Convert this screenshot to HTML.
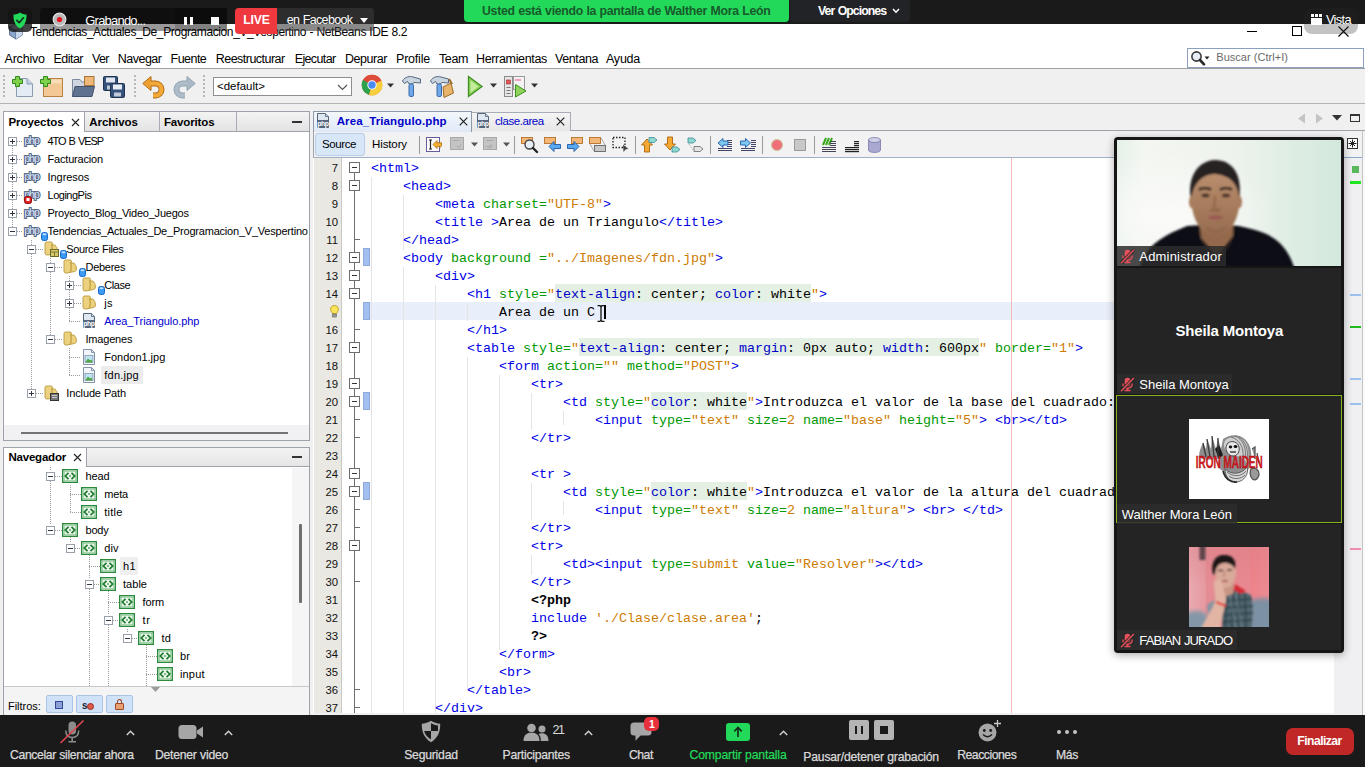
<!DOCTYPE html>
<html>
<head>
<meta charset="utf-8">
<title>Zoom - NetBeans</title>
<style>
*{box-sizing:border-box;margin:0;padding:0}
html,body{width:1365px;height:767px;overflow:hidden;background:#f0f0f0;font-family:"Liberation Sans",sans-serif;}
.a{position:absolute}
.t{position:absolute;white-space:nowrap;line-height:1}
#zt{left:0;top:0;width:1365px;height:24px;background:#1a1a1a}
#nbtitle{left:0;top:24px;width:1365px;height:23px;background:#fff}
#nbmenu{left:0;top:47px;width:1365px;height:22px;background:#fff;border-bottom:1px solid #a0a0a0}
#nbtool{left:0;top:70px;width:1365px;height:34px;background:#f0f0f0;border-bottom:1px solid #b4b4b4}
#zb{left:0;top:715px;width:1365px;height:52px;background:#1a1a1a}
.menu{font-size:12.4px;color:#000;top:53px}
.zl{font-size:12.3px;color:#d8d8d8;top:749px;letter-spacing:-0.1px}
.tree{font-size:11.6px;color:#000;letter-spacing:-0.2px}
.code{font-family:"Liberation Mono",monospace;font-size:13.333px;white-space:pre;color:#000;left:371px}
.ln{font-size:11.3px;color:#111;width:25px;text-align:right;left:313px}
.b{color:#0000e6}.g{color:#009900}.o{color:#ce7b00}.k{font-weight:bold}
.hl{background:#e3f0e3;padding:3px 0 0 0}.n{color:#0000c8}
</style>
</head>
<body>
<!-- ===== NetBeans window chrome ===== -->
<div class="a" id="nbtitle"></div>
<div class="a" id="nbmenu"></div>
<div class="a" id="nbtool"></div>
<!--TITLE-->
<svg class="a" style="left:8px;top:23px" width="16" height="17" viewBox="0 0 20 21"><path d="M10 1 L18 5 L18 15 L10 20 L2 15 L2 5 Z" fill="#8ea6c9" stroke="#3c5680" stroke-width="1"/><path d="M2 5 L10 9 L18 5 M10 9 L10 20" stroke="#3c5680" stroke-width="1" fill="none"/><path d="M10 9 L18 5 L18 15 L10 20Z" fill="#c9d6ea"/><path d="M2 5 L10 1 L18 5 L10 9Z" fill="#dfe8f5" stroke="#3c5680" stroke-width=".8"/></svg>
<div class="t" style="left:30.0px;top:26.0px;font-size:12.00px;color:#000;letter-spacing:-0.39px;word-spacing:0.39px;">Tendencias_Actuales_De_Programacion_V_Vespertino - NetBeans IDE 8.2</div>
<div class="a" style="left:1247px;top:31px;width:10px;height:1px;background:#000"></div>
<div class="a" style="left:1292px;top:26px;width:10px;height:10px;border:1px solid #000"></div>
<svg class="a" style="left:1338px;top:26px" width="11" height="11"><path d="M0.5 0.5 L10.5 10.5 M10.5 0.5 L0.5 10.5" stroke="#000" stroke-width="1.1"/></svg>
<!--/TITLE-->
<!--MENU-->
<div class="t" style="left:4.5px;top:53.0px;font-size:12.50px;color:#000;letter-spacing:-0.20px;">Archivo</div>
<div class="t" style="left:53.5px;top:53.0px;font-size:12.50px;color:#000;letter-spacing:-0.53px;">Editar</div>
<div class="t" style="left:92.0px;top:53.0px;font-size:12.50px;color:#000;letter-spacing:-0.72px;">Ver</div>
<div class="t" style="left:117.8px;top:53.0px;font-size:12.50px;color:#000;letter-spacing:-0.52px;">Navegar</div>
<div class="t" style="left:170.6px;top:53.0px;font-size:12.50px;color:#000;letter-spacing:-0.54px;">Fuente</div>
<div class="t" style="left:215.7px;top:53.0px;font-size:12.50px;color:#000;letter-spacing:-0.52px;">Reestructurar</div>
<div class="t" style="left:294.7px;top:53.0px;font-size:12.50px;color:#000;letter-spacing:-0.63px;">Ejecutar</div>
<div class="t" style="left:345.0px;top:53.0px;font-size:12.50px;color:#000;letter-spacing:-0.45px;">Depurar</div>
<div class="t" style="left:396.0px;top:53.0px;font-size:12.50px;color:#000;letter-spacing:-0.21px;">Profile</div>
<div class="t" style="left:439.0px;top:53.0px;font-size:12.50px;color:#000;letter-spacing:-0.39px;">Team</div>
<div class="t" style="left:476.0px;top:53.0px;font-size:12.50px;color:#000;letter-spacing:-0.34px;">Herramientas</div>
<div class="t" style="left:555.0px;top:53.0px;font-size:12.50px;color:#000;letter-spacing:-0.41px;">Ventana</div>
<div class="t" style="left:606.0px;top:53.0px;font-size:12.50px;color:#000;letter-spacing:-0.24px;">Ayuda</div>
<div class="a" style="left:1187px;top:48px;width:177px;height:20px;background:#fff;border:1px solid #8aa0bd"></div>
<svg class="a" style="left:1190px;top:50px" width="22" height="16" viewBox="0 0 22 16"><circle cx="6.5" cy="6.5" r="4.6" fill="#e8eef8" stroke="#3a3a3a" stroke-width="1.6"/><path d="M10 10 L14 14.3" stroke="#2a2a2a" stroke-width="2.6" stroke-linecap="round"/><path d="M14.5 6.5 L19.5 6.5 L17 9.5Z" fill="#222"/></svg>
<div class="t" style="left:1216.3px;top:52.0px;font-size:11.00px;color:#6a6a6a;letter-spacing:0.03px;word-spacing:-0.03px;">Buscar (Ctrl+I)</div>
<!--/MENU-->
<!--TOOLBAR-->
<div class="a" style="left:3px;top:75px;width:2px;height:24px;background:repeating-linear-gradient(to bottom,#b8b8b8 0,#b8b8b8 2px,transparent 2px,transparent 4px)"></div>
<div class="a" style="left:134px;top:75px;width:2px;height:24px;background:repeating-linear-gradient(to bottom,#b8b8b8 0,#b8b8b8 2px,transparent 2px,transparent 4px)"></div>
<div class="a" style="left:203px;top:75px;width:2px;height:24px;background:repeating-linear-gradient(to bottom,#b8b8b8 0,#b8b8b8 2px,transparent 2px,transparent 4px)"></div>
<svg class="a" style="left:11px;top:75px" width="24" height="24" viewBox="0 0 24 24"><path d="M5.5 3.5 H16 L21.5 9 V21.5 H5.5Z" fill="#e3ecf5" stroke="#8a9bb0"/><path d="M16 3.5 V9 H21.5" fill="#c5d3e2" stroke="#8a9bb0"/><path d="M4.5 1.5 h4 v3 h3 v4 h-3 v3 h-4 v-3 h-3 v-4 h3z" fill="#7fd04a" stroke="#2f8a1c" stroke-width="1"/></svg>
<svg class="a" style="left:39px;top:75px" width="26" height="24" viewBox="0 0 26 24"><rect x="4.5" y="3.5" width="19" height="18" fill="#f3c895" stroke="#b98245"/><rect x="5.5" y="4.5" width="17" height="4" fill="#f8dcb8"/><path d="M4.5 1.5 h4 v3 h3 v4 h-3 v3 h-4 v-3 h-3 v-4 h3z" fill="#7fd04a" stroke="#2f8a1c" stroke-width="1"/></svg>
<svg class="a" style="left:71px;top:75px" width="25" height="24" viewBox="0 0 25 24"><path d="M1.5 21.5 V4.5 H9 L11 7 H18 V21.5Z" fill="#cfd6df" stroke="#7d8aa0"/><rect x="13.500" y="1.500" width="9.5" height="9" fill="#f0b877" stroke="#a8733a"/><path d="M1.5 21.5 L4 11.500 H23.500 L21 21.5Z" fill="#5f7391" stroke="#41536e"/></svg>
<svg class="a" style="left:102px;top:75px" width="25" height="24" viewBox="0 0 25 24"><rect x="1.500" y="1.500" width="14" height="14" rx="1" fill="#35527a" stroke="#1f3350"/><rect x="4" y="2.500" width="9" height="5" fill="#dfe6ef"/><rect x="5" y="10.5" width="7" height="4" fill="#c0cad8"/><rect x="8.500" y="8.500" width="14" height="14" rx="1" fill="#35527a" stroke="#1f3350"/><rect x="11" y="9.500" width="9" height="5" fill="#e8eef5"/><rect x="12" y="17.500" width="7" height="4" fill="#c0cad8"/></svg>
<svg class="a" style="left:142px;top:75px" width="24" height="24" viewBox="0 0 24 24"><path d="M8 8.500 H13.500 A6 6 0 0 1 13.500 20.500 H11" stroke="#b06a10" stroke-width="6" fill="none"/><path d="M0.800 8.500 L9 1.500 V15.500Z" fill="#f0a030" stroke="#b06a10" stroke-width="1"/><path d="M8 8.500 H13.500 A6 6 0 0 1 13.500 20.500 H11" stroke="#f3a83a" stroke-width="4.200" fill="none"/></svg>
<svg class="a" style="left:172px;top:75px" width="24" height="24" viewBox="0 0 24 24"><path d="M16 8.500 H10.500 A6 6 0 0 0 10.500 20.500 H13" stroke="#93a3b0" stroke-width="6" fill="none"/><path d="M23.200 8.500 L15 1.500 V15.500Z" fill="#a9b8c4" stroke="#93a3b0" stroke-width="1"/><path d="M16 8.500 H10.500 A6 6 0 0 0 10.500 20.500 H13" stroke="#adbcc8" stroke-width="4.200" fill="none"/></svg>
<div class="a" style="left:213px;top:77px;width:139px;height:19px;background:#fff;border:1px solid #8e8e8e"></div>
<div class="t" style="left:217.0px;top:81.0px;font-size:11.50px;color:#000;">&lt;default&gt;</div>
<svg class="a" style="left:337px;top:84px" width="11" height="7"><path d="M1 1 L5.500 5.500 L10 1" stroke="#555" stroke-width="1.200" fill="none"/></svg>
<svg class="a" style="left:361px;top:74px" width="22" height="22" viewBox="0 0 22 22"><circle cx="11" cy="11" r="10.300" fill="#dd4b3a"/><path d="M11 11 L2.100 5.800 A10.300 10.300 0 0 0 8 20.850Z" fill="#2fa24e"/><path d="M11 11 L8 20.850 A10.300 10.300 0 0 0 20.300 6.500 L11 6.500Z" fill="#f7cf3d"/><path d="M11 11 L20.300 6.500 A10.300 10.300 0 0 0 2.100 5.800Z" fill="#dd4b3a"/><circle cx="11" cy="11" r="4.700" fill="#fff"/><circle cx="11" cy="11" r="3.700" fill="#4a8af4"/></svg>
<svg class="a" style="left:387px;top:83px" width="7" height="5"><path d="M0 0.500 H7 L3.500 4.500Z" fill="#333"/></svg>
<svg class="a" style="left:401px;top:75px" width="21" height="23" viewBox="0 0 21 23"><path d="M1.500 6 C4 1.500 9 1 12 2 L19.500 4 L19.500 8 L13 7.500 L11 9 L8 9 L6.500 6.500 L3.500 8.500Z" fill="#c8d4e0" stroke="#55687f"/><rect x="8" y="9" width="4.500" height="12.500" rx="1.500" fill="#6fa8e8" stroke="#3b68a8"/></svg>
<svg class="a" style="left:429px;top:75px" width="26" height="23" viewBox="0 0 26 23"><path d="M1.500 6 C4 1.500 9 1 12 2 L19.500 4 L19.500 8 L13 7.500 L11 9 L8 9 L6.500 6.500 L3.500 8.500Z" fill="#c8d4e0" stroke="#55687f"/><rect x="8" y="9" width="4.500" height="12.500" rx="1.500" fill="#6fa8e8" stroke="#3b68a8"/><path d="M14 12 L22 8 L24.500 18 L15 22.500Z" fill="#e8b46a" stroke="#9a6a2a"/><path d="M20 4 L23 9" stroke="#9a6a2a" stroke-width="2"/></svg>
<svg class="a" style="left:466px;top:75px" width="18" height="23" viewBox="0 0 18 23"><path d="M2.500 1.500 L16 11.500 L2.500 21.500Z" fill="#8fd45a" stroke="#3f8f22" stroke-width="1.300"/><path d="M4.500 5.500 L12.500 11.500 L4.500 17.500Z" fill="#c5eda0"/></svg>
<svg class="a" style="left:490px;top:83px" width="7" height="5"><path d="M0 0.500 H7 L3.500 4.500Z" fill="#333"/></svg>
<svg class="a" style="left:503px;top:75px" width="25" height="23" viewBox="0 0 25 23"><rect x="1.500" y="1.500" width="8" height="20" fill="#e6e6e6" stroke="#8a8a8a"/><rect x="3.500" y="5" width="4" height="4" fill="#e05a5a" stroke="#a02a2a" stroke-width=".6"/><path d="M3.500 12.500h4M3.500 15.500h4M3.500 18.500h4" stroke="#777" stroke-width="1"/><rect x="10.500" y="1.500" width="11" height="13" fill="#f3f3f3" stroke="#9a9a9a"/><rect x="12" y="4" width="6" height="2" fill="#f0a0c0"/><path d="M12.500 9.500 L23 16 L12.500 22Z" fill="#8fd45a" stroke="#3f8f22"/></svg>
<svg class="a" style="left:531px;top:83px" width="7" height="5"><path d="M0 0.500 H7 L3.500 4.500Z" fill="#333"/></svg>
<!--/TOOLBAR-->
<!--PROJECTS-->
<!-- ===== Projects panel ===== -->
<div class="a" style="left:3px;top:111px;width:307px;height:330px;background:#fff;border:1px solid #9ea3ab"></div>
<div class="a" style="left:4px;top:112px;width:305px;height:20px;background:linear-gradient(#f3f3f3,#e3e3e3);border-bottom:1px solid #9ea3ab"></div>
<div class="a" style="left:4px;top:112px;width:81px;height:20px;background:#fff;border-right:1px solid #9ea3ab"></div>
<div class="a" style="left:159px;top:112px;width:1px;height:19px;background:#a8adb5"></div><div class="a" style="left:236px;top:112px;width:1px;height:19px;background:#a8adb5"></div>
<div class="t" style="left:8.5px;top:117.0px;font-size:11.50px;color:#000;font-weight:700;letter-spacing:-0.07px;">Proyectos</div>
<svg class="a" style="left:71px;top:118px" width="9" height="9"><path d="M1 1 L8 8 M8 1 L1 8" stroke="#222" stroke-width="1.100"/></svg>
<div class="t" style="left:89.3px;top:117.0px;font-size:11.50px;color:#000;font-weight:700;letter-spacing:-0.10px;">Archivos</div>
<div class="t" style="left:164.0px;top:117.0px;font-size:11.50px;color:#000;font-weight:700;letter-spacing:-0.15px;">Favoritos</div>
<div class="a" style="left:292px;top:121px;width:10px;height:2px;background:#333"></div>
<div class="a" style="left:12px;top:146px;width:1px;height:81px;background:repeating-linear-gradient(to bottom,#9a9a9a 0,#9a9a9a 1px,transparent 1px,transparent 2px)"></div>
<div class="a" style="left:17px;top:141px;width:6px;height:1px;background:repeating-linear-gradient(to right,#9a9a9a 0,#9a9a9a 1px,transparent 1px,transparent 2px)"></div>
<div class="a" style="left:8px;top:137px;width:9px;height:9px;background:#fff;border:1px solid #9aa0aa"></div><div class="a" style="left:10px;top:141px;width:5px;height:1px;background:#334"></div><div class="a" style="left:12px;top:139px;width:1px;height:5px;background:#334"></div>
<div class="t" style="left:24px;top:136px;font-size:10.4px;font-weight:700;color:#c6d6ec;letter-spacing:-1.5px;-webkit-text-stroke:1.5px #2f4262;paint-order:stroke fill">php</div>
<div class="t" style="left:47.5px;top:136.0px;font-size:11.00px;color:#000;letter-spacing:-1.06px;word-spacing:1.06px;">4TO B VESP</div>
<div class="a" style="left:17px;top:159px;width:6px;height:1px;background:repeating-linear-gradient(to right,#9a9a9a 0,#9a9a9a 1px,transparent 1px,transparent 2px)"></div>
<div class="a" style="left:8px;top:155px;width:9px;height:9px;background:#fff;border:1px solid #9aa0aa"></div><div class="a" style="left:10px;top:159px;width:5px;height:1px;background:#334"></div><div class="a" style="left:12px;top:157px;width:1px;height:5px;background:#334"></div>
<div class="t" style="left:24px;top:154px;font-size:10.4px;font-weight:700;color:#c6d6ec;letter-spacing:-1.5px;-webkit-text-stroke:1.5px #2f4262;paint-order:stroke fill">php</div>
<div class="t" style="left:47.5px;top:154.0px;font-size:11.00px;color:#000;letter-spacing:-0.18px;">Facturacion</div>
<div class="a" style="left:17px;top:177px;width:6px;height:1px;background:repeating-linear-gradient(to right,#9a9a9a 0,#9a9a9a 1px,transparent 1px,transparent 2px)"></div>
<div class="a" style="left:8px;top:173px;width:9px;height:9px;background:#fff;border:1px solid #9aa0aa"></div><div class="a" style="left:10px;top:177px;width:5px;height:1px;background:#334"></div><div class="a" style="left:12px;top:175px;width:1px;height:5px;background:#334"></div>
<div class="t" style="left:24px;top:172px;font-size:10.4px;font-weight:700;color:#c6d6ec;letter-spacing:-1.5px;-webkit-text-stroke:1.5px #2f4262;paint-order:stroke fill">php</div>
<div class="t" style="left:47.5px;top:172.0px;font-size:11.00px;color:#000;letter-spacing:-0.05px;">Ingresos</div>
<div class="a" style="left:17px;top:195px;width:6px;height:1px;background:repeating-linear-gradient(to right,#9a9a9a 0,#9a9a9a 1px,transparent 1px,transparent 2px)"></div>
<div class="a" style="left:8px;top:191px;width:9px;height:9px;background:#fff;border:1px solid #9aa0aa"></div><div class="a" style="left:10px;top:195px;width:5px;height:1px;background:#334"></div><div class="a" style="left:12px;top:193px;width:1px;height:5px;background:#334"></div>
<div class="t" style="left:24px;top:190px;font-size:10.4px;font-weight:700;color:#c6d6ec;letter-spacing:-1.5px;-webkit-text-stroke:1.5px #2f4262;paint-order:stroke fill">php</div>
<div class="t" style="left:47.5px;top:190.0px;font-size:11.00px;color:#000;letter-spacing:-0.49px;">LogingPis</div>
<div class="a" style="left:17px;top:213px;width:6px;height:1px;background:repeating-linear-gradient(to right,#9a9a9a 0,#9a9a9a 1px,transparent 1px,transparent 2px)"></div>
<div class="a" style="left:8px;top:209px;width:9px;height:9px;background:#fff;border:1px solid #9aa0aa"></div><div class="a" style="left:10px;top:213px;width:5px;height:1px;background:#334"></div><div class="a" style="left:12px;top:211px;width:1px;height:5px;background:#334"></div>
<div class="t" style="left:24px;top:208px;font-size:10.4px;font-weight:700;color:#c6d6ec;letter-spacing:-1.5px;-webkit-text-stroke:1.5px #2f4262;paint-order:stroke fill">php</div>
<div class="t" style="left:47.5px;top:208.0px;font-size:11.00px;color:#000;letter-spacing:-0.23px;">Proyecto_Blog_Video_Juegos</div>
<svg class="a" style="left:24px;top:196px" width="8" height="8"><rect x="0.500" y="0.500" width="7" height="7" rx="2" fill="#e02020" stroke="#901010"/><rect x="2.500" y="2" width="3" height="3" fill="#fff"/></svg>
<div class="a" style="left:17px;top:231px;width:6px;height:1px;background:repeating-linear-gradient(to right,#9a9a9a 0,#9a9a9a 1px,transparent 1px,transparent 2px)"></div>
<div class="a" style="left:8px;top:227px;width:9px;height:9px;background:#fff;border:1px solid #9aa0aa"></div><div class="a" style="left:10px;top:231px;width:5px;height:1px;background:#334"></div>
<div class="t" style="left:24px;top:226px;font-size:10.4px;font-weight:700;color:#c6d6ec;letter-spacing:-1.5px;-webkit-text-stroke:1.5px #2f4262;paint-order:stroke fill">php</div>
<svg class="a" style="left:41px;top:232px" width="7" height="9" viewBox="0 0 7 9"><rect x="0.500" y="0.500" width="6" height="8" rx="2" fill="#3a9af5" stroke="#1668c8"/><ellipse cx="3.500" cy="2.300" rx="2" ry="1" fill="#bfe0ff"/></svg>
<div class="t" style="left:47.5px;top:226.0px;font-size:11.00px;color:#000;letter-spacing:-0.21px;">Tendencias_Actuales_De_Programacion_V_Vespertino</div>
<div class="a" style="left:31px;top:240px;width:1px;height:153px;background:repeating-linear-gradient(to bottom,#9a9a9a 0,#9a9a9a 1px,transparent 1px,transparent 2px)"></div>
<div class="a" style="left:36px;top:249px;width:7px;height:1px;background:repeating-linear-gradient(to right,#9a9a9a 0,#9a9a9a 1px,transparent 1px,transparent 2px)"></div>
<div class="a" style="left:27px;top:245px;width:9px;height:9px;background:#fff;border:1px solid #9aa0aa"></div><div class="a" style="left:29px;top:249px;width:5px;height:1px;background:#334"></div>
<svg class="a" style="left:44px;top:241px" width="15" height="15" viewBox="0 0 15 15"><path d="M1 2.500 Q1 1 2.500 1 H7 Q8.500 1 8.500 2.500 V4 H11 Q13.500 6.500 13.500 10 Q13.500 12 11.500 12.500 L4 14 Q1 14.500 1 12Z" fill="#ecd17e" stroke="#b99a3c" stroke-width=".9"/><path d="M7.500 3 Q9 7 7.500 13" stroke="#c9a94a" stroke-width="1.600" fill="none"/></svg><svg class="a" style="left:50px;top:249px" width="9" height="8"><rect x="0.500" y="0.500" width="8" height="7" fill="#d8c86a" stroke="#6a6a2a"/><path d="M0.500 3H8.500M4.500 3V7.500" stroke="#6a6a2a" stroke-width=".8"/></svg>
<svg class="a" style="left:60px;top:250px" width="7" height="9" viewBox="0 0 7 9"><rect x="0.500" y="0.500" width="6" height="8" rx="2" fill="#3a9af5" stroke="#1668c8"/><ellipse cx="3.500" cy="2.300" rx="2" ry="1" fill="#bfe0ff"/></svg>
<div class="t" style="left:66.3px;top:244.0px;font-size:11.00px;color:#000;letter-spacing:-0.36px;word-spacing:0.36px;">Source Files</div>
<div class="a" style="left:50px;top:258px;width:1px;height:81px;background:repeating-linear-gradient(to bottom,#9a9a9a 0,#9a9a9a 1px,transparent 1px,transparent 2px)"></div>
<div class="a" style="left:55px;top:267px;width:7px;height:1px;background:repeating-linear-gradient(to right,#9a9a9a 0,#9a9a9a 1px,transparent 1px,transparent 2px)"></div>
<div class="a" style="left:46px;top:263px;width:9px;height:9px;background:#fff;border:1px solid #9aa0aa"></div><div class="a" style="left:48px;top:267px;width:5px;height:1px;background:#334"></div>
<svg class="a" style="left:63px;top:259px" width="15" height="15" viewBox="0 0 15 15"><path d="M1 2.500 Q1 1 2.500 1 H7 Q8.500 1 8.500 2.500 V4 H11 Q13.500 6.500 13.500 10 Q13.500 12 11.500 12.500 L4 14 Q1 14.500 1 12Z" fill="#ecd17e" stroke="#b99a3c" stroke-width=".9"/><path d="M7.500 3 Q9 7 7.500 13" stroke="#c9a94a" stroke-width="1.600" fill="none"/></svg>
<svg class="a" style="left:79px;top:268px" width="7" height="9" viewBox="0 0 7 9"><rect x="0.500" y="0.500" width="6" height="8" rx="2" fill="#3a9af5" stroke="#1668c8"/><ellipse cx="3.500" cy="2.300" rx="2" ry="1" fill="#bfe0ff"/></svg>
<div class="t" style="left:85.5px;top:262.0px;font-size:11.00px;color:#000;letter-spacing:-0.27px;">Deberes</div>
<div class="a" style="left:69px;top:276px;width:1px;height:45px;background:repeating-linear-gradient(to bottom,#9a9a9a 0,#9a9a9a 1px,transparent 1px,transparent 2px)"></div>
<div class="a" style="left:74px;top:285px;width:7px;height:1px;background:repeating-linear-gradient(to right,#9a9a9a 0,#9a9a9a 1px,transparent 1px,transparent 2px)"></div>
<div class="a" style="left:65px;top:281px;width:9px;height:9px;background:#fff;border:1px solid #9aa0aa"></div><div class="a" style="left:67px;top:285px;width:5px;height:1px;background:#334"></div><div class="a" style="left:69px;top:283px;width:1px;height:5px;background:#334"></div>
<svg class="a" style="left:82px;top:277px" width="15" height="15" viewBox="0 0 15 15"><path d="M1 2.500 Q1 1 2.500 1 H7 Q8.500 1 8.500 2.500 V4 H11 Q13.500 6.500 13.500 10 Q13.500 12 11.500 12.500 L4 14 Q1 14.500 1 12Z" fill="#ecd17e" stroke="#b99a3c" stroke-width=".9"/><path d="M7.500 3 Q9 7 7.500 13" stroke="#c9a94a" stroke-width="1.600" fill="none"/></svg>
<svg class="a" style="left:98px;top:286px" width="7" height="9" viewBox="0 0 7 9"><rect x="0.500" y="0.500" width="6" height="8" rx="2" fill="#3a9af5" stroke="#1668c8"/><ellipse cx="3.500" cy="2.300" rx="2" ry="1" fill="#bfe0ff"/></svg>
<div class="t" style="left:104.3px;top:280.0px;font-size:11.00px;color:#000;letter-spacing:-0.45px;">Clase</div>
<div class="a" style="left:74px;top:303px;width:7px;height:1px;background:repeating-linear-gradient(to right,#9a9a9a 0,#9a9a9a 1px,transparent 1px,transparent 2px)"></div>
<div class="a" style="left:65px;top:299px;width:9px;height:9px;background:#fff;border:1px solid #9aa0aa"></div><div class="a" style="left:67px;top:303px;width:5px;height:1px;background:#334"></div><div class="a" style="left:69px;top:301px;width:1px;height:5px;background:#334"></div>
<svg class="a" style="left:82px;top:295px" width="15" height="15" viewBox="0 0 15 15"><path d="M1 2.500 Q1 1 2.500 1 H7 Q8.500 1 8.500 2.500 V4 H11 Q13.500 6.500 13.500 10 Q13.500 12 11.500 12.500 L4 14 Q1 14.500 1 12Z" fill="#ecd17e" stroke="#b99a3c" stroke-width=".9"/><path d="M7.500 3 Q9 7 7.500 13" stroke="#c9a94a" stroke-width="1.600" fill="none"/></svg>
<div class="t" style="left:104.3px;top:298.0px;font-size:11.00px;color:#000;letter-spacing:0.17px;">js</div>
<div class="a" style="left:69px;top:321px;width:12px;height:1px;background:repeating-linear-gradient(to right,#9a9a9a 0,#9a9a9a 1px,transparent 1px,transparent 2px)"></div>
<svg class="a" style="left:82px;top:313px" width="14" height="16" viewBox="0 0 14 16"><path d="M1.500 0.500 H9.500 L12.500 3.500 V14.500 H1.500Z" fill="#dfe7f1" stroke="#55657c"/><path d="M9.500 0.500 V3.500 H12.500" fill="#c3cfde" stroke="#55657c" stroke-width=".8"/><rect x="2" y="7" width="10" height="7" fill="#56677f"/><text x="7" y="12.700" font-family="Liberation Sans" font-size="6.800" font-weight="700" fill="#fff" text-anchor="middle" letter-spacing="-0.400">php</text></svg>
<div class="t" style="left:104.3px;top:316.0px;font-size:11.00px;color:#0000d0;letter-spacing:-0.06px;">Area_Triangulo.php</div>
<div class="a" style="left:55px;top:339px;width:7px;height:1px;background:repeating-linear-gradient(to right,#9a9a9a 0,#9a9a9a 1px,transparent 1px,transparent 2px)"></div>
<div class="a" style="left:46px;top:335px;width:9px;height:9px;background:#fff;border:1px solid #9aa0aa"></div><div class="a" style="left:48px;top:339px;width:5px;height:1px;background:#334"></div>
<svg class="a" style="left:63px;top:331px" width="15" height="15" viewBox="0 0 15 15"><path d="M1 2.500 Q1 1 2.500 1 H7 Q8.500 1 8.500 2.500 V4 H11 Q13.500 6.500 13.500 10 Q13.500 12 11.500 12.500 L4 14 Q1 14.500 1 12Z" fill="#ecd17e" stroke="#b99a3c" stroke-width=".9"/><path d="M7.500 3 Q9 7 7.500 13" stroke="#c9a94a" stroke-width="1.600" fill="none"/></svg>
<div class="t" style="left:85.5px;top:334.0px;font-size:11.00px;color:#000;letter-spacing:-0.20px;">Imagenes</div>
<div class="a" style="left:69px;top:348px;width:1px;height:27px;background:repeating-linear-gradient(to bottom,#9a9a9a 0,#9a9a9a 1px,transparent 1px,transparent 2px)"></div>
<div class="a" style="left:69px;top:357px;width:12px;height:1px;background:repeating-linear-gradient(to right,#9a9a9a 0,#9a9a9a 1px,transparent 1px,transparent 2px)"></div>
<svg class="a" style="left:82px;top:349px" width="14" height="16" viewBox="0 0 14 16"><path d="M1.500 0.500 H9.500 L12.500 3.500 V15.500 H1.500Z" fill="#f2f5f9" stroke="#8293ab"/><path d="M9.500 0.500 V3.500 H12.500" fill="none" stroke="#8293ab"/><rect x="3" y="6.500" width="8" height="7" fill="#bfe3f5" stroke="#6a7c90" stroke-width=".6"/><path d="M3.300 13.200 L6 9.500 L8 11.500 L9.300 10.500 L10.700 13.200Z" fill="#4aa83a"/></svg>
<div class="t" style="left:104.3px;top:352.0px;font-size:11.00px;color:#000;letter-spacing:-0.02px;">Fondon1.jpg</div>
<div class="a" style="left:101px;top:366px;width:42px;height:18px;background:#ececec"></div>
<div class="a" style="left:69px;top:375px;width:12px;height:1px;background:repeating-linear-gradient(to right,#9a9a9a 0,#9a9a9a 1px,transparent 1px,transparent 2px)"></div>
<svg class="a" style="left:82px;top:367px" width="14" height="16" viewBox="0 0 14 16"><path d="M1.500 0.500 H9.500 L12.500 3.500 V15.500 H1.500Z" fill="#f2f5f9" stroke="#8293ab"/><path d="M9.500 0.500 V3.500 H12.500" fill="none" stroke="#8293ab"/><rect x="3" y="6.500" width="8" height="7" fill="#bfe3f5" stroke="#6a7c90" stroke-width=".6"/><path d="M3.300 13.200 L6 9.500 L8 11.500 L9.300 10.500 L10.700 13.200Z" fill="#4aa83a"/></svg>
<div class="t" style="left:104.3px;top:370.0px;font-size:11.00px;color:#000;letter-spacing:0.22px;">fdn.jpg</div>
<div class="a" style="left:36px;top:393px;width:7px;height:1px;background:repeating-linear-gradient(to right,#9a9a9a 0,#9a9a9a 1px,transparent 1px,transparent 2px)"></div>
<div class="a" style="left:27px;top:389px;width:9px;height:9px;background:#fff;border:1px solid #9aa0aa"></div><div class="a" style="left:29px;top:393px;width:5px;height:1px;background:#334"></div><div class="a" style="left:31px;top:391px;width:1px;height:5px;background:#334"></div>
<svg class="a" style="left:44px;top:385px" width="15" height="15" viewBox="0 0 15 15"><path d="M1 2.500 Q1 1 2.500 1 H7 Q8.500 1 8.500 2.500 V4 H11 Q13.500 6.500 13.500 10 Q13.500 12 11.500 12.500 L4 14 Q1 14.500 1 12Z" fill="#ecd17e" stroke="#b99a3c" stroke-width=".9"/><path d="M7.500 3 Q9 7 7.500 13" stroke="#c9a94a" stroke-width="1.600" fill="none"/></svg><svg class="a" style="left:50px;top:393px" width="9" height="8"><rect x="0.500" y="0.500" width="8" height="7" fill="#777" stroke="#333"/><path d="M2 2.500H7M2 4.500H7" stroke="#ddd" stroke-width=".8"/></svg>
<div class="t" style="left:66.3px;top:388.0px;font-size:11.00px;color:#000;letter-spacing:-0.13px;word-spacing:0.13px;">Include Path</div>
<div class="a" style="left:4px;top:425px;width:305px;height:15px;background:#f1f1f4"></div>
<div class="a" style="left:21px;top:432px;width:267px;height:2px;background:#737373"></div>
<!--/PROJECTS-->
<!--NAVIGATOR-->
<!-- ===== Navigator panel ===== -->
<div class="a" style="left:3px;top:447px;width:307px;height:270px;background:#fff;border:1px solid #9ea3ab"></div>
<div class="a" style="left:4px;top:448px;width:305px;height:19px;background:linear-gradient(#f3f3f3,#e6e6e6);border-bottom:1px solid #9ea3ab"></div>
<div class="a" style="left:4px;top:448px;width:83px;height:19px;background:#fff;border-right:1px solid #9ea3ab"></div>
<div class="t" style="left:8.5px;top:452.0px;font-size:11.50px;color:#000;font-weight:700;letter-spacing:-0.22px;">Navegador</div>
<svg class="a" style="left:73px;top:453px" width="9" height="9"><path d="M1 1 L8 8 M8 1 L1 8" stroke="#222" stroke-width="1.100"/></svg>
<div class="a" style="left:292px;top:456px;width:10px;height:2px;background:#333"></div>
<div class="a" style="left:50px;top:467px;width:1px;height:4px;background:repeating-linear-gradient(to bottom,#9a9a9a 0,#9a9a9a 1px,transparent 1px,transparent 2px)"></div>
<div class="a" style="left:50px;top:481px;width:1px;height:44px;background:repeating-linear-gradient(to bottom,#9a9a9a 0,#9a9a9a 1px,transparent 1px,transparent 2px)"></div>
<div class="a" style="left:70px;top:485px;width:1px;height:28px;background:repeating-linear-gradient(to bottom,#9a9a9a 0,#9a9a9a 1px,transparent 1px,transparent 2px)"></div>
<div class="a" style="left:70px;top:535px;width:1px;height:8px;background:repeating-linear-gradient(to bottom,#9a9a9a 0,#9a9a9a 1px,transparent 1px,transparent 2px)"></div>
<div class="a" style="left:89px;top:553px;width:1px;height:26px;background:repeating-linear-gradient(to bottom,#9a9a9a 0,#9a9a9a 1px,transparent 1px,transparent 2px)"></div>
<div class="a" style="left:108px;top:589px;width:1px;height:26px;background:repeating-linear-gradient(to bottom,#9a9a9a 0,#9a9a9a 1px,transparent 1px,transparent 2px)"></div>
<div class="a" style="left:108px;top:625px;width:1px;height:88px;background:repeating-linear-gradient(to bottom,#9a9a9a 0,#9a9a9a 1px,transparent 1px,transparent 2px)"></div>
<div class="a" style="left:127px;top:629px;width:1px;height:4px;background:repeating-linear-gradient(to bottom,#9a9a9a 0,#9a9a9a 1px,transparent 1px,transparent 2px)"></div>
<div class="a" style="left:89px;top:589px;width:1px;height:124px;background:repeating-linear-gradient(to bottom,#9a9a9a 0,#9a9a9a 1px,transparent 1px,transparent 2px)"></div>
<div class="a" style="left:146px;top:643px;width:1px;height:47px;background:repeating-linear-gradient(to bottom,#9a9a9a 0,#9a9a9a 1px,transparent 1px,transparent 2px)"></div>
<div class="a" style="left:120px;top:557px;width:18px;height:18px;background:#efefef"></div>
<div class="a" style="left:46px;top:472px;width:9px;height:9px;background:#fff;border:1px solid #9aa0aa"></div><div class="a" style="left:48px;top:476px;width:5px;height:1px;background:#334"></div>
<div class="a" style="left:55px;top:476px;width:7px;height:1px;background:repeating-linear-gradient(to right,#9a9a9a 0,#9a9a9a 1px,transparent 1px,transparent 2px)"></div>
<svg class="a" style="left:62px;top:469px" width="16" height="14" viewBox="0 0 16 14"><rect x="0.700" y="0.700" width="14.600" height="12.600" fill="#fff" stroke="#2c8a3c" stroke-width="1.400"/><rect x="2.200" y="2.200" width="11.600" height="9.600" fill="#eaf6ea" stroke="#7cc488" stroke-width=".8"/><path d="M6.500 3.800 L3.300 7 L6.500 10.200 M9.500 3.800 L12.700 7 L9.500 10.200" stroke="#1e7a2e" stroke-width="1.700" fill="none"/><rect x="7.300" y="6.300" width="1.400" height="1.400" fill="#1e7a2e"/></svg>
<div class="t" style="left:85.5px;top:471.0px;font-size:11.00px;color:#000;letter-spacing:-0.12px;">head</div>
<div class="a" style="left:70px;top:494px;width:11px;height:1px;background:repeating-linear-gradient(to right,#9a9a9a 0,#9a9a9a 1px,transparent 1px,transparent 2px)"></div>
<svg class="a" style="left:81px;top:487px" width="16" height="14" viewBox="0 0 16 14"><rect x="0.700" y="0.700" width="14.600" height="12.600" fill="#fff" stroke="#2c8a3c" stroke-width="1.400"/><rect x="2.200" y="2.200" width="11.600" height="9.600" fill="#eaf6ea" stroke="#7cc488" stroke-width=".8"/><path d="M6.500 3.800 L3.300 7 L6.500 10.200 M9.500 3.800 L12.700 7 L9.500 10.200" stroke="#1e7a2e" stroke-width="1.700" fill="none"/><rect x="7.300" y="6.300" width="1.400" height="1.400" fill="#1e7a2e"/></svg>
<div class="t" style="left:104.2px;top:489.0px;font-size:11.00px;color:#000;letter-spacing:-0.17px;">meta</div>
<div class="a" style="left:70px;top:512px;width:11px;height:1px;background:repeating-linear-gradient(to right,#9a9a9a 0,#9a9a9a 1px,transparent 1px,transparent 2px)"></div>
<svg class="a" style="left:81px;top:505px" width="16" height="14" viewBox="0 0 16 14"><rect x="0.700" y="0.700" width="14.600" height="12.600" fill="#fff" stroke="#2c8a3c" stroke-width="1.400"/><rect x="2.200" y="2.200" width="11.600" height="9.600" fill="#eaf6ea" stroke="#7cc488" stroke-width=".8"/><path d="M6.500 3.800 L3.300 7 L6.500 10.200 M9.500 3.800 L12.700 7 L9.500 10.200" stroke="#1e7a2e" stroke-width="1.700" fill="none"/><rect x="7.300" y="6.300" width="1.400" height="1.400" fill="#1e7a2e"/></svg>
<div class="t" style="left:104.2px;top:507.0px;font-size:11.00px;color:#000;letter-spacing:0.28px;">title</div>
<div class="a" style="left:46px;top:526px;width:9px;height:9px;background:#fff;border:1px solid #9aa0aa"></div><div class="a" style="left:48px;top:530px;width:5px;height:1px;background:#334"></div>
<div class="a" style="left:55px;top:530px;width:7px;height:1px;background:repeating-linear-gradient(to right,#9a9a9a 0,#9a9a9a 1px,transparent 1px,transparent 2px)"></div>
<svg class="a" style="left:62px;top:523px" width="16" height="14" viewBox="0 0 16 14"><rect x="0.700" y="0.700" width="14.600" height="12.600" fill="#fff" stroke="#2c8a3c" stroke-width="1.400"/><rect x="2.200" y="2.200" width="11.600" height="9.600" fill="#eaf6ea" stroke="#7cc488" stroke-width=".8"/><path d="M6.500 3.800 L3.300 7 L6.500 10.200 M9.500 3.800 L12.700 7 L9.500 10.200" stroke="#1e7a2e" stroke-width="1.700" fill="none"/><rect x="7.300" y="6.300" width="1.400" height="1.400" fill="#1e7a2e"/></svg>
<div class="t" style="left:85.5px;top:525.0px;font-size:11.00px;color:#000;letter-spacing:-0.19px;">body</div>
<div class="a" style="left:66px;top:544px;width:9px;height:9px;background:#fff;border:1px solid #9aa0aa"></div><div class="a" style="left:68px;top:548px;width:5px;height:1px;background:#334"></div>
<div class="a" style="left:75px;top:548px;width:6px;height:1px;background:repeating-linear-gradient(to right,#9a9a9a 0,#9a9a9a 1px,transparent 1px,transparent 2px)"></div>
<svg class="a" style="left:81px;top:541px" width="16" height="14" viewBox="0 0 16 14"><rect x="0.700" y="0.700" width="14.600" height="12.600" fill="#fff" stroke="#2c8a3c" stroke-width="1.400"/><rect x="2.200" y="2.200" width="11.600" height="9.600" fill="#eaf6ea" stroke="#7cc488" stroke-width=".8"/><path d="M6.500 3.800 L3.300 7 L6.500 10.200 M9.500 3.800 L12.700 7 L9.500 10.200" stroke="#1e7a2e" stroke-width="1.700" fill="none"/><rect x="7.300" y="6.300" width="1.400" height="1.400" fill="#1e7a2e"/></svg>
<div class="t" style="left:104.2px;top:543.0px;font-size:11.00px;color:#000;letter-spacing:0.11px;">div</div>
<div class="a" style="left:89px;top:566px;width:11px;height:1px;background:repeating-linear-gradient(to right,#9a9a9a 0,#9a9a9a 1px,transparent 1px,transparent 2px)"></div>
<svg class="a" style="left:100px;top:559px" width="16" height="14" viewBox="0 0 16 14"><rect x="0.700" y="0.700" width="14.600" height="12.600" fill="#fff" stroke="#2c8a3c" stroke-width="1.400"/><rect x="2.200" y="2.200" width="11.600" height="9.600" fill="#eaf6ea" stroke="#7cc488" stroke-width=".8"/><path d="M6.500 3.800 L3.300 7 L6.500 10.200 M9.500 3.800 L12.700 7 L9.500 10.200" stroke="#1e7a2e" stroke-width="1.700" fill="none"/><rect x="7.300" y="6.300" width="1.400" height="1.400" fill="#1e7a2e"/></svg>
<div class="t" style="left:123.0px;top:561.0px;font-size:11.00px;color:#000;letter-spacing:0.28px;">h1</div>
<div class="a" style="left:85px;top:580px;width:9px;height:9px;background:#fff;border:1px solid #9aa0aa"></div><div class="a" style="left:87px;top:584px;width:5px;height:1px;background:#334"></div>
<div class="a" style="left:94px;top:584px;width:6px;height:1px;background:repeating-linear-gradient(to right,#9a9a9a 0,#9a9a9a 1px,transparent 1px,transparent 2px)"></div>
<svg class="a" style="left:100px;top:577px" width="16" height="14" viewBox="0 0 16 14"><rect x="0.700" y="0.700" width="14.600" height="12.600" fill="#fff" stroke="#2c8a3c" stroke-width="1.400"/><rect x="2.200" y="2.200" width="11.600" height="9.600" fill="#eaf6ea" stroke="#7cc488" stroke-width=".8"/><path d="M6.500 3.800 L3.300 7 L6.500 10.200 M9.500 3.800 L12.700 7 L9.500 10.200" stroke="#1e7a2e" stroke-width="1.700" fill="none"/><rect x="7.300" y="6.300" width="1.400" height="1.400" fill="#1e7a2e"/></svg>
<div class="t" style="left:123.0px;top:579.0px;font-size:11.00px;color:#000;letter-spacing:0.03px;">table</div>
<div class="a" style="left:108px;top:602px;width:11px;height:1px;background:repeating-linear-gradient(to right,#9a9a9a 0,#9a9a9a 1px,transparent 1px,transparent 2px)"></div>
<svg class="a" style="left:119px;top:595px" width="16" height="14" viewBox="0 0 16 14"><rect x="0.700" y="0.700" width="14.600" height="12.600" fill="#fff" stroke="#2c8a3c" stroke-width="1.400"/><rect x="2.200" y="2.200" width="11.600" height="9.600" fill="#eaf6ea" stroke="#7cc488" stroke-width=".8"/><path d="M6.500 3.800 L3.300 7 L6.500 10.200 M9.500 3.800 L12.700 7 L9.500 10.200" stroke="#1e7a2e" stroke-width="1.700" fill="none"/><rect x="7.300" y="6.300" width="1.400" height="1.400" fill="#1e7a2e"/></svg>
<div class="t" style="left:142.6px;top:597.0px;font-size:11.00px;color:#000;letter-spacing:-0.17px;">form</div>
<div class="a" style="left:104px;top:616px;width:9px;height:9px;background:#fff;border:1px solid #9aa0aa"></div><div class="a" style="left:106px;top:620px;width:5px;height:1px;background:#334"></div>
<div class="a" style="left:113px;top:620px;width:6px;height:1px;background:repeating-linear-gradient(to right,#9a9a9a 0,#9a9a9a 1px,transparent 1px,transparent 2px)"></div>
<svg class="a" style="left:119px;top:613px" width="16" height="14" viewBox="0 0 16 14"><rect x="0.700" y="0.700" width="14.600" height="12.600" fill="#fff" stroke="#2c8a3c" stroke-width="1.400"/><rect x="2.200" y="2.200" width="11.600" height="9.600" fill="#eaf6ea" stroke="#7cc488" stroke-width=".8"/><path d="M6.500 3.800 L3.300 7 L6.500 10.200 M9.500 3.800 L12.700 7 L9.500 10.200" stroke="#1e7a2e" stroke-width="1.700" fill="none"/><rect x="7.300" y="6.300" width="1.400" height="1.400" fill="#1e7a2e"/></svg>
<div class="t" style="left:142.6px;top:615.0px;font-size:11.00px;color:#000;letter-spacing:0.68px;">tr</div>
<div class="a" style="left:123px;top:634px;width:9px;height:9px;background:#fff;border:1px solid #9aa0aa"></div><div class="a" style="left:125px;top:638px;width:5px;height:1px;background:#334"></div>
<div class="a" style="left:132px;top:638px;width:6px;height:1px;background:repeating-linear-gradient(to right,#9a9a9a 0,#9a9a9a 1px,transparent 1px,transparent 2px)"></div>
<svg class="a" style="left:138px;top:631px" width="16" height="14" viewBox="0 0 16 14"><rect x="0.700" y="0.700" width="14.600" height="12.600" fill="#fff" stroke="#2c8a3c" stroke-width="1.400"/><rect x="2.200" y="2.200" width="11.600" height="9.600" fill="#eaf6ea" stroke="#7cc488" stroke-width=".8"/><path d="M6.500 3.800 L3.300 7 L6.500 10.200 M9.500 3.800 L12.700 7 L9.500 10.200" stroke="#1e7a2e" stroke-width="1.700" fill="none"/><rect x="7.300" y="6.300" width="1.400" height="1.400" fill="#1e7a2e"/></svg>
<div class="t" style="left:161.6px;top:633.0px;font-size:11.00px;color:#000;letter-spacing:0.11px;">td</div>
<div class="a" style="left:146px;top:656px;width:11px;height:1px;background:repeating-linear-gradient(to right,#9a9a9a 0,#9a9a9a 1px,transparent 1px,transparent 2px)"></div>
<svg class="a" style="left:157px;top:649px" width="16" height="14" viewBox="0 0 16 14"><rect x="0.700" y="0.700" width="14.600" height="12.600" fill="#fff" stroke="#2c8a3c" stroke-width="1.400"/><rect x="2.200" y="2.200" width="11.600" height="9.600" fill="#eaf6ea" stroke="#7cc488" stroke-width=".8"/><path d="M6.500 3.800 L3.300 7 L6.500 10.200 M9.500 3.800 L12.700 7 L9.500 10.200" stroke="#1e7a2e" stroke-width="1.700" fill="none"/><rect x="7.300" y="6.300" width="1.400" height="1.400" fill="#1e7a2e"/></svg>
<div class="t" style="left:180.0px;top:651.0px;font-size:11.00px;color:#000;letter-spacing:0.11px;">br</div>
<div class="a" style="left:146px;top:674px;width:11px;height:1px;background:repeating-linear-gradient(to right,#9a9a9a 0,#9a9a9a 1px,transparent 1px,transparent 2px)"></div>
<svg class="a" style="left:157px;top:667px" width="16" height="14" viewBox="0 0 16 14"><rect x="0.700" y="0.700" width="14.600" height="12.600" fill="#fff" stroke="#2c8a3c" stroke-width="1.400"/><rect x="2.200" y="2.200" width="11.600" height="9.600" fill="#eaf6ea" stroke="#7cc488" stroke-width=".8"/><path d="M6.500 3.800 L3.300 7 L6.500 10.200 M9.500 3.800 L12.700 7 L9.500 10.200" stroke="#1e7a2e" stroke-width="1.700" fill="none"/><rect x="7.300" y="6.300" width="1.400" height="1.400" fill="#1e7a2e"/></svg>
<div class="t" style="left:180.0px;top:669.0px;font-size:11.00px;color:#000;letter-spacing:0.15px;">input</div>
<div class="a" style="left:292px;top:468px;width:17px;height:218px;background:#f5f5f5"></div>
<div class="a" style="left:299px;top:524px;width:3px;height:79px;background:#6f6f6f;border-radius:1px"></div>
<div class="a" style="left:4px;top:686px;width:305px;height:1px;background:#c8c8c8"></div>
<div class="a" style="left:4px;top:687px;width:305px;height:28px;background:#f4f4f4"></div>
<svg class="a" style="left:151px;top:687px" width="9" height="5"><path d="M0 0 H9 L4.500 5Z" fill="#999"/></svg>
<div class="t" style="left:8.0px;top:701.0px;font-size:11.00px;color:#000;letter-spacing:-0.04px;">Filtros:</div>
<div class="a" style="left:46px;top:695px;width:27px;height:18px;background:#cfe2f8;border:1px solid #a9c3e6;border-radius:2px"></div>
<div class="a" style="left:76px;top:695px;width:27px;height:18px;background:#cfe2f8;border:1px solid #a9c3e6;border-radius:2px"></div>
<div class="a" style="left:106px;top:695px;width:27px;height:18px;background:#cfe2f8;border:1px solid #a9c3e6;border-radius:2px"></div>
<div class="a" style="left:55px;top:701px;width:8px;height:8px;background:#8aa0d8;border:1px solid #34489a"></div>
<div class="t" style="left:82.0px;top:701.0px;font-size:10.00px;color:#223;font-weight:700;">s</div>
<div class="a" style="left:87px;top:703px;width:7px;height:7px;border-radius:4px;background:#e05a4a;border:1px solid #9a2a1a"></div>
<div class="a" style="left:115px;top:703px;width:9px;height:7px;background:#e8a070;border:1px solid #a04a2a;border-radius:1px"></div><div class="a" style="left:117px;top:699px;width:5px;height:5px;border:1px solid #a04a2a;border-bottom:none;border-radius:3px 3px 0 0"></div>
<!--/NAVIGATOR-->
<!--EDITOR-->
<!-- ===== Editor ===== -->
<div class="a" style="left:313px;top:158px;width:1052px;height:555px;background:#fff"></div>
<div class="a" style="left:314px;top:158px;width:28px;height:555px;background:#e9e8e2;border-right:1px solid #c8c8c4"></div>
<div class="a" style="left:363px;top:302px;width:760px;height:18px;background:#e9effa"></div>
<div class="a" style="left:371px;top:177px;width:1px;height:536px;background:#e4e4e4"></div>
<div class="a" style="left:403px;top:195px;width:1px;height:55px;background:#e4e4e4"></div>
<div class="a" style="left:403px;top:267px;width:1px;height:446px;background:#e4e4e4"></div>
<div class="a" style="left:435px;top:285px;width:1px;height:428px;background:#e4e4e4"></div>
<div class="a" style="left:467px;top:303px;width:1px;height:18px;background:#e4e4e4"></div>
<div class="a" style="left:467px;top:357px;width:1px;height:333px;background:#e4e4e4"></div>
<div class="a" style="left:499px;top:375px;width:1px;height:275px;background:#e4e4e4"></div>
<div class="a" style="left:531px;top:393px;width:1px;height:37px;background:#e4e4e4"></div>
<div class="a" style="left:531px;top:483px;width:1px;height:37px;background:#e4e4e4"></div>
<div class="a" style="left:531px;top:555px;width:1px;height:20px;background:#e4e4e4"></div>
<div class="a" style="left:563px;top:411px;width:1px;height:14px;background:#e4e4e4"></div>
<div class="a" style="left:563px;top:501px;width:1px;height:14px;background:#e4e4e4"></div>
<div class="a" style="left:1011px;top:158px;width:1px;height:555px;background:#f3b8b8"></div>
<div class="a" style="left:354px;top:168px;width:1px;height:545px;background:#6e6e6e"></div>
<div class="t ln" style="top:163px">7</div>
<div class="a" style="left:349px;top:162px;width:11px;height:11px;background:#fff;border:1px solid #6e6e6e"></div><div class="a" style="left:352px;top:167px;width:5px;height:1px;background:#333"></div>
<div class="t code" style="top:160px;height:18px;line-height:18px"><span class="b">&lt;html&gt;</span></div>
<div class="t ln" style="top:181px">8</div>
<div class="a" style="left:349px;top:180px;width:11px;height:11px;background:#fff;border:1px solid #6e6e6e"></div><div class="a" style="left:352px;top:185px;width:5px;height:1px;background:#333"></div>
<div class="t code" style="top:178px;height:18px;line-height:18px">    <span class="b">&lt;head&gt;</span></div>
<div class="t ln" style="top:199px">9</div>
<div class="t code" style="top:196px;height:18px;line-height:18px">        <span class="b">&lt;meta </span><span class="g">charset=</span><span class="o">"UTF-8"</span><span class="b">&gt;</span></div>
<div class="t ln" style="top:217px">10</div>
<div class="t code" style="top:214px;height:18px;line-height:18px">        <span class="b">&lt;title &gt;</span>Area de un Triangulo<span class="b">&lt;/title&gt;</span></div>
<div class="t ln" style="top:235px">11</div>
<div class="a" style="left:354px;top:239px;width:6px;height:1px;background:#6e6e6e"></div>
<div class="t code" style="top:232px;height:18px;line-height:18px">    <span class="b">&lt;/head&gt;</span></div>
<div class="t ln" style="top:253px">12</div>
<div class="a" style="left:349px;top:252px;width:11px;height:11px;background:#fff;border:1px solid #6e6e6e"></div><div class="a" style="left:352px;top:257px;width:5px;height:1px;background:#333"></div>
<div class="a" style="left:363px;top:248px;width:7px;height:18px;background:#a3bff0;border:1px solid #8fa9de"></div>
<div class="t code" style="top:250px;height:18px;line-height:18px">    <span class="b">&lt;body </span><span class="g">background =</span><span class="o">"../Imagenes/fdn.jpg"</span><span class="b">&gt;</span></div>
<div class="t ln" style="top:271px">13</div>
<div class="a" style="left:349px;top:270px;width:11px;height:11px;background:#fff;border:1px solid #6e6e6e"></div><div class="a" style="left:352px;top:275px;width:5px;height:1px;background:#333"></div>
<div class="t code" style="top:268px;height:18px;line-height:18px">        <span class="b">&lt;div&gt;</span></div>
<div class="t ln" style="top:289px">14</div>
<div class="a" style="left:349px;top:288px;width:11px;height:11px;background:#fff;border:1px solid #6e6e6e"></div><div class="a" style="left:352px;top:293px;width:5px;height:1px;background:#333"></div>
<div class="t code" style="top:286px;height:18px;line-height:18px">            <span class="b">&lt;h1 </span><span class="g">style=</span><span class="o">"</span><span class="hl"><span class="n">text-align</span>: center; <span class="n">color</span>: white</span><span class="o">"</span><span class="b">&gt;</span></div>
<div class="a" style="left:363px;top:302px;width:7px;height:18px;background:#a3bff0;border:1px solid #8fa9de"></div>
<div class="t code" style="top:304px;height:18px;line-height:18px">                Area de un C</div>
<div class="t ln" style="top:325px">16</div>
<div class="a" style="left:354px;top:329px;width:6px;height:1px;background:#6e6e6e"></div>
<div class="t code" style="top:322px;height:18px;line-height:18px">            <span class="b">&lt;/h1&gt;</span></div>
<div class="t ln" style="top:343px">17</div>
<div class="a" style="left:349px;top:342px;width:11px;height:11px;background:#fff;border:1px solid #6e6e6e"></div><div class="a" style="left:352px;top:347px;width:5px;height:1px;background:#333"></div>
<div class="t code" style="top:340px;height:18px;line-height:18px">            <span class="b">&lt;table </span><span class="g">style=</span><span class="o">"</span><span class="hl"><span class="n">text-align</span>: center; <span class="n">margin</span>: 0px auto; <span class="n">width</span>: 600px</span><span class="o">"</span> <span class="g">border=</span><span class="o">"1"</span><span class="b">&gt;</span></div>
<div class="t ln" style="top:361px">18</div>
<div class="t code" style="top:358px;height:18px;line-height:18px">                <span class="b">&lt;form </span><span class="g">action=</span><span class="o">""</span> <span class="g">method=</span><span class="o">"POST"</span><span class="b">&gt;</span></div>
<div class="t ln" style="top:379px">19</div>
<div class="a" style="left:349px;top:378px;width:11px;height:11px;background:#fff;border:1px solid #6e6e6e"></div><div class="a" style="left:352px;top:383px;width:5px;height:1px;background:#333"></div>
<div class="t code" style="top:376px;height:18px;line-height:18px">                    <span class="b">&lt;tr&gt;</span></div>
<div class="t ln" style="top:397px">20</div>
<div class="a" style="left:349px;top:396px;width:11px;height:11px;background:#fff;border:1px solid #6e6e6e"></div><div class="a" style="left:352px;top:401px;width:5px;height:1px;background:#333"></div>
<div class="a" style="left:363px;top:392px;width:7px;height:18px;background:#a3bff0;border:1px solid #8fa9de"></div>
<div class="t code" style="top:394px;height:18px;line-height:18px">                        <span class="b">&lt;td </span><span class="g">style=</span><span class="o">"</span><span class="hl"><span class="n">color</span>: white</span><span class="o">"</span><span class="b">&gt;</span>Introduzca el valor de la base del cuadrado:</div>
<div class="t ln" style="top:415px">21</div>
<div class="a" style="left:354px;top:419px;width:6px;height:1px;background:#6e6e6e"></div>
<div class="t code" style="top:412px;height:18px;line-height:18px">                            <span class="b">&lt;input </span><span class="g">type=</span><span class="o">"text"</span> <span class="g">size=</span><span class="o">2</span> <span class="g">name=</span><span class="o">"base"</span> <span class="g">height=</span><span class="o">"5"</span><span class="b">&gt;</span> <span class="b">&lt;br&gt;&lt;/td&gt;</span></div>
<div class="t ln" style="top:433px">22</div>
<div class="a" style="left:354px;top:437px;width:6px;height:1px;background:#6e6e6e"></div>
<div class="t code" style="top:430px;height:18px;line-height:18px">                    <span class="b">&lt;/tr&gt;</span></div>
<div class="t ln" style="top:451px">23</div>
<div class="t ln" style="top:469px">24</div>
<div class="a" style="left:349px;top:468px;width:11px;height:11px;background:#fff;border:1px solid #6e6e6e"></div><div class="a" style="left:352px;top:473px;width:5px;height:1px;background:#333"></div>
<div class="t code" style="top:466px;height:18px;line-height:18px">                    <span class="b">&lt;tr &gt;</span></div>
<div class="t ln" style="top:487px">25</div>
<div class="a" style="left:349px;top:486px;width:11px;height:11px;background:#fff;border:1px solid #6e6e6e"></div><div class="a" style="left:352px;top:491px;width:5px;height:1px;background:#333"></div>
<div class="a" style="left:363px;top:482px;width:7px;height:18px;background:#a3bff0;border:1px solid #8fa9de"></div>
<div class="t code" style="top:484px;height:18px;line-height:18px">                        <span class="b">&lt;td </span><span class="g">style=</span><span class="o">"</span><span class="hl"><span class="n">color</span>: white</span><span class="o">"</span><span class="b">&gt;</span>Introduzca el valor de la altura del cuadrado:</div>
<div class="t ln" style="top:505px">26</div>
<div class="a" style="left:354px;top:509px;width:6px;height:1px;background:#6e6e6e"></div>
<div class="t code" style="top:502px;height:18px;line-height:18px">                            <span class="b">&lt;input </span><span class="g">type=</span><span class="o">"text"</span> <span class="g">size=</span><span class="o">2</span> <span class="g">name=</span><span class="o">"altura"</span><span class="b">&gt;</span> <span class="b">&lt;br&gt;</span> <span class="b">&lt;/td&gt;</span></div>
<div class="t ln" style="top:523px">27</div>
<div class="a" style="left:354px;top:527px;width:6px;height:1px;background:#6e6e6e"></div>
<div class="t code" style="top:520px;height:18px;line-height:18px">                    <span class="b">&lt;/tr&gt;</span></div>
<div class="t ln" style="top:541px">28</div>
<div class="a" style="left:349px;top:540px;width:11px;height:11px;background:#fff;border:1px solid #6e6e6e"></div><div class="a" style="left:352px;top:545px;width:5px;height:1px;background:#333"></div>
<div class="t code" style="top:538px;height:18px;line-height:18px">                    <span class="b">&lt;tr&gt;</span></div>
<div class="t ln" style="top:559px">29</div>
<div class="t code" style="top:556px;height:18px;line-height:18px">                        <span class="b">&lt;td&gt;&lt;input </span><span class="g">type=</span><span class="o">submit</span> <span class="g">value=</span><span class="o">"Resolver"</span><span class="b">&gt;&lt;/td&gt;</span></div>
<div class="t ln" style="top:577px">30</div>
<div class="a" style="left:354px;top:581px;width:6px;height:1px;background:#6e6e6e"></div>
<div class="t code" style="top:574px;height:18px;line-height:18px">                    <span class="b">&lt;/tr&gt;</span></div>
<div class="t ln" style="top:595px">31</div>
<div class="t code" style="top:592px;height:18px;line-height:18px">                    <span class="k">&lt;?php</span></div>
<div class="t ln" style="top:613px">32</div>
<div class="t code" style="top:610px;height:18px;line-height:18px">                    <span class="b">include</span> <span class="o">'./Clase/clase.area'</span>;</div>
<div class="t ln" style="top:631px">33</div>
<div class="t code" style="top:628px;height:18px;line-height:18px">                    <span class="k">?&gt;</span></div>
<div class="t ln" style="top:649px">34</div>
<div class="t code" style="top:646px;height:18px;line-height:18px">                <span class="b">&lt;/form&gt;</span></div>
<div class="t ln" style="top:667px">35</div>
<div class="t code" style="top:664px;height:18px;line-height:18px">                <span class="b">&lt;br&gt;</span></div>
<div class="t ln" style="top:685px">36</div>
<div class="a" style="left:354px;top:689px;width:6px;height:1px;background:#6e6e6e"></div>
<div class="t code" style="top:682px;height:18px;line-height:18px">            <span class="b">&lt;/table&gt;</span></div>
<div class="t ln" style="top:703px">37</div>
<div class="a" style="left:354px;top:707px;width:6px;height:1px;background:#6e6e6e"></div>
<div class="t code" style="top:700px;height:18px;line-height:18px">        <span class="b">&lt;/div&gt;</span></div>
<svg class="a" style="left:330px;top:305px" width="9" height="13" viewBox="0 0 9 13"><path d="M4.500 0.600 C7 0.600 8.400 2.300 8.400 4.300 C8.400 6 7 7 6.500 8.500 H2.500 C2 7 0.600 6 0.600 4.300 C0.600 2.300 2 0.600 4.500 0.600Z" fill="#fce45a" stroke="#b89a1a" stroke-width=".9"/><rect x="2.600" y="9" width="3.800" height="3" fill="#9a9a9a" stroke="#666" stroke-width=".6"/></svg>
<div class="a" style="left:604px;top:305px;width:2px;height:14px;background:#000"></div>
<svg class="a" style="left:597px;top:305px" width="8" height="17" viewBox="0 0 8 17"><path d="M0.500 0.700 H3 L4 1.700 L5 0.700 H7.500 M4 1.700 V15.300 M0.500 16.300 H3 L4 15.300 L5 16.300 H7.500" stroke="#111" stroke-width="1.300" fill="none"/></svg><!-- ===== Editor tabs + toolbar ===== -->
<div class="a" style="left:313px;top:111px;width:1052px;height:20px;background:#f0f0f0;border-bottom:1px solid #9ea3ab"></div>
<div class="a" style="left:313px;top:111px;width:159px;height:21px;background:linear-gradient(#f4f8fd,#dfe9f6);border:1px solid #8e9aab;border-bottom:none"></div>
<div class="a" style="left:472px;top:112px;width:99px;height:19px;background:linear-gradient(#f5f5f5,#e6e6e6);border:1px solid #a8adb5;border-left:none;border-bottom:none"></div>
<svg class="a" style="left:316px;top:113px" width="14" height="16" viewBox="0 0 14 16"><path d="M1.500 0.500 H9.500 L12.500 3.500 V14.500 H1.500Z" fill="#dfe7f1" stroke="#55657c"/><path d="M9.500 0.500 V3.500 H12.500" fill="#c3cfde" stroke="#55657c" stroke-width=".8"/><rect x="2" y="7" width="10" height="7" fill="#56677f"/><text x="7" y="12.700" font-family="Liberation Sans" font-size="6.800" font-weight="700" fill="#fff" text-anchor="middle" letter-spacing="-0.400">php</text></svg>
<div class="t" style="left:336.7px;top:116.0px;font-size:11.50px;color:#0000c8;font-weight:700;letter-spacing:0.11px;">Area_Triangulo.php</div>
<svg class="a" style="left:459px;top:117px" width="9" height="9"><path d="M0.700 0.700 L8.300 8.300 M8.300 0.700 L0.700 8.300" stroke="#222" stroke-width="1.200"/></svg>
<svg class="a" style="left:476px;top:113px" width="14" height="16" viewBox="0 0 14 16"><path d="M1.500 0.500 H9.500 L12.500 3.500 V14.500 H1.500Z" fill="#dfe7f1" stroke="#55657c"/><path d="M9.500 0.500 V3.500 H12.500" fill="#c3cfde" stroke="#55657c" stroke-width=".8"/><rect x="2" y="7" width="10" height="7" fill="#56677f"/><text x="7" y="12.700" font-family="Liberation Sans" font-size="6.800" font-weight="700" fill="#fff" text-anchor="middle" letter-spacing="-0.400">php</text></svg>
<div class="t" style="left:495.0px;top:116.0px;font-size:11.50px;color:#0000c8;letter-spacing:-0.43px;">clase.area</div>
<svg class="a" style="left:556px;top:117px" width="9" height="9"><path d="M0.700 0.700 L8.300 8.300 M8.300 0.700 L0.700 8.300" stroke="#222" stroke-width="1.200"/></svg>
<svg class="a" style="left:1297px;top:113px" width="9" height="11"><path d="M8 0.500 V10.500 L1 5.500Z" fill="#c4c4c4"/></svg>
<svg class="a" style="left:1315px;top:113px" width="9" height="11"><path d="M1 0.500 V10.500 L8 5.500Z" fill="#c4c4c4"/></svg>
<svg class="a" style="left:1332px;top:115px" width="10" height="6"><path d="M0 0 H10 L5 5.500Z" fill="#333"/></svg>
<div class="a" style="left:1350px;top:114px;width:10px;height:8px;border:1px solid #333;border-top:2px solid #333"></div>
<div class="a" style="left:313px;top:132px;width:1052px;height:26px;background:#f2f2f2;border-bottom:1px solid #9fb0c8;border-left:1px solid #9ea3ab"></div>
<div class="a" style="left:315px;top:133px;width:50px;height:23px;background:#d7e7f8;border:1px solid #b9cde6;border-radius:3px"></div>
<div class="t" style="left:322.0px;top:139.0px;font-size:11.50px;color:#000;letter-spacing:-0.41px;">Source</div>
<div class="t" style="left:372.0px;top:139.0px;font-size:11.50px;color:#000;letter-spacing:-0.11px;">History</div>
<div class="a" style="left:419px;top:136px;width:1px;height:18px;background:#9a9a9a"></div>
<div class="a" style="left:514px;top:136px;width:1px;height:18px;background:#9a9a9a"></div>
<div class="a" style="left:635px;top:136px;width:1px;height:18px;background:#9a9a9a"></div>
<div class="a" style="left:710px;top:136px;width:1px;height:18px;background:#9a9a9a"></div>
<div class="a" style="left:762px;top:136px;width:1px;height:18px;background:#9a9a9a"></div>
<div class="a" style="left:814px;top:136px;width:1px;height:18px;background:#9a9a9a"></div>
<svg class="a" style="left:426px;top:137px" width="17" height="15" viewBox="0 0 17 15"><rect x="0.500" y="0.500" width="13" height="14" fill="#fdfdfd" stroke="#6a5a9a"/><path d="M3 3H6M4.500 3V12M3 12H6" stroke="#222" stroke-width="1.200"/><path d="M7 7.500 L11 3.500 V5.800 H15.500 Q16.500 9 13.500 11 V9.300 H11 V11.500Z" fill="#f5b030" stroke="#a86a10" stroke-width=".8"/></svg>
<svg class="a" style="left:450px;top:137px" width="16" height="15"><rect x="0.500" y="0.500" width="13" height="12" fill="#c4c4c4" stroke="#a8a8a8"/><path d="M6 9 h6 l-2 -2.500 v5z" fill="#b0b0b0"/><rect x="2.500" y="3" width="7" height="1" fill="#aaa"/></svg>
<svg class="a" style="left:471px;top:142px" width="7" height="5"><path d="M0 0.500 H7 L3.500 4.500Z" fill="#555"/></svg>
<svg class="a" style="left:482px;top:137px" width="16" height="15"><rect x="1.500" y="0.500" width="13" height="12" fill="#c4c4c4" stroke="#a8a8a8"/><path d="M2 9 h6 v-2.500 l3 2.500 l-3 2.500z" fill="#b0b0b0"/><rect x="4.500" y="3" width="7" height="1" fill="#aaa"/></svg>
<svg class="a" style="left:503px;top:142px" width="7" height="5"><path d="M0 0.500 H7 L3.500 4.500Z" fill="#555"/></svg>
<svg class="a" style="left:521px;top:136px" width="18" height="18" viewBox="0 0 18 18"><rect x="0.5" y="1.5" width="11" height="6" fill="#f3b877" stroke="#b5722a" stroke-width=".9"/><circle cx="8.500" cy="8.500" r="4.500" fill="#e8eef6" stroke="#444" stroke-width="1.400"/><path d="M12 12 L16 16" stroke="#222" stroke-width="2.400" stroke-linecap="round"/></svg>
<svg class="a" style="left:544px;top:136px" width="18" height="18" viewBox="0 0 18 18"><rect x="0.5" y="1.5" width="11" height="6" fill="#f3b877" stroke="#b5722a" stroke-width=".9"/><path d="M5 10.500 L10 5.500 V8.500 H16.500 V12.500 H10 V15.500Z" fill="#5aa8f0" stroke="#1c5aa8" stroke-width=".9"/></svg>
<svg class="a" style="left:566px;top:136px" width="18" height="18" viewBox="0 0 18 18"><rect x="5.5" y="1.5" width="11" height="6" fill="#f3b877" stroke="#b5722a" stroke-width=".9"/><path d="M13 10.500 L8 5.500 V8.500 H1.500 V12.500 H8 V15.500Z" fill="#5aa8f0" stroke="#1c5aa8" stroke-width=".9"/></svg>
<svg class="a" style="left:589px;top:136px" width="18" height="18" viewBox="0 0 18 18"><rect x="0.5" y="1.5" width="11" height="6" fill="#f3b877" stroke="#b5722a" stroke-width=".9"/><path d="M1 8 L5 15 M12 2 L16 9" stroke="#888" stroke-width=".7"/><rect x="5.500" y="9.500" width="11" height="6" fill="#c8c8c8" stroke="#666" stroke-width=".9"/></svg>
<svg class="a" style="left:612px;top:136px" width="18" height="18" viewBox="0 0 18 18"><rect x="1" y="1.500" width="12" height="10" fill="none" stroke="#222" stroke-width="1.300" stroke-dasharray="1.500 1.500"/><path d="M11 8.500 L16.500 13 L13.800 13.300 L11.500 16Z" fill="#444"/></svg>
<svg class="a" style="left:641px;top:136px" width="18" height="18" viewBox="0 0 18 18"><path d="M6 3 L11.500 9 H8.500 V16 H3.500 V9 H0.500Z" fill="#f5a832" stroke="#a8650f" stroke-width=".9"/><path d="M8 1.5 h5 l3 2.500 l-3 2.500 h-5z" fill="#8fd8d0" stroke="#3a8a9a" stroke-width=".8"/></svg>
<svg class="a" style="left:664px;top:136px" width="18" height="18" viewBox="0 0 18 18"><path d="M6 14 L11.500 8 H8.500 V1 H3.500 V8 H0.500Z" fill="#f5a832" stroke="#a8650f" stroke-width=".9"/><path d="M8 11 h5 l3 2.500 l-3 2.500 h-5z" fill="#8fd8d0" stroke="#3a8a9a" stroke-width=".8"/></svg>
<svg class="a" style="left:687px;top:136px" width="18" height="18" viewBox="0 0 18 18"><path d="M1 2 h5 l3 2.500 l-3 2.500 h-5z" fill="#8fd8d0" stroke="#3a8a9a" stroke-width=".8"/><path d="M2 8 L6 14" stroke="#888" stroke-width=".7" stroke-dasharray="1 1"/><path d="M7 10.500 h6 l3 2.500 l-3 2.500 h-6z" fill="#e4e4e4" stroke="#666" stroke-width=".8"/></svg>
<svg class="a" style="left:717px;top:136px" width="17" height="18" viewBox="0 0 17 18"><rect x="10" y="4" width="5" height="1" fill="#446"/><rect x="10" y="6" width="5" height="1" fill="#446"/><rect x="10" y="8" width="5" height="1" fill="#446"/><rect x="10" y="10" width="5" height="1" fill="#446"/><rect x="1" y="12" width="14" height="1" fill="#446"/><rect x="1" y="14" width="14" height="1" fill="#446"/><path d="M1 7 L6 2.500 V5 H11 V9 H6 V11.500Z" fill="#7ec8f0" stroke="#1c5aa8" stroke-width=".9"/></svg>
<svg class="a" style="left:740px;top:136px" width="17" height="18" viewBox="0 0 17 18"><rect x="11" y="4" width="5" height="1" fill="#446"/><rect x="11" y="6" width="5" height="1" fill="#446"/><rect x="11" y="8" width="5" height="1" fill="#446"/><rect x="11" y="10" width="5" height="1" fill="#446"/><rect x="1" y="12" width="14" height="1" fill="#446"/><rect x="1" y="14" width="14" height="1" fill="#446"/><path d="M10.500 7 L5.500 2.500 V5 H0.500 V9 H5.500 V11.500Z" fill="#7ec8f0" stroke="#1c5aa8" stroke-width=".9"/></svg>
<div class="a" style="left:771px;top:139px;width:12px;height:12px;border-radius:6px;background:#f0707a;border:1px solid #c8c89a"></div>
<div class="a" style="left:794px;top:139px;width:12px;height:12px;background:#c8c8c8;border:1px solid #9a9a9a"></div>
<svg class="a" style="left:822px;top:136px" width="15" height="18" viewBox="0 0 15 18"><path d="M1 9 L4 2 M4 9 L7 2 M7 9 L10 2" stroke="#38a818" stroke-width="2"/><rect x="8" y="5" width="6" height="1" fill="#445"/><rect x="8" y="7" width="6" height="1" fill="#445"/><rect x="8" y="9" width="6" height="1" fill="#445"/><rect x="0" y="11" width="14" height="1" fill="#445"/><rect x="0" y="13" width="14" height="1" fill="#445"/><rect x="0" y="15" width="14" height="1" fill="#445"/></svg>
<svg class="a" style="left:845px;top:136px" width="15" height="18" viewBox="0 0 15 18"><rect x="9" y="5" width="5" height="1.200" fill="#222"/><rect x="9" y="7" width="5" height="1.200" fill="#222"/><rect x="9" y="9" width="5" height="1.200" fill="#222"/><rect x="0" y="11" width="14" height="1.200" fill="#222"/><rect x="0" y="13" width="14" height="1.200" fill="#222"/><rect x="0" y="15" width="14" height="1.200" fill="#222"/></svg>
<svg class="a" style="left:868px;top:137px" width="13" height="16" viewBox="0 0 13 16"><path d="M0.500 3 V13 A6 2.500 0 0 0 12.500 13 V3Z" fill="#a8a8d0" stroke="#7878a8" stroke-width=".8"/><ellipse cx="6.500" cy="3" rx="6" ry="2.500" fill="#d0d0e8" stroke="#7878a8" stroke-width=".8"/></svg>
<!--/EDITOR-->
<!--VIDEO-->
<!-- ===== Right stripe (NetBeans error stripe) ===== -->
<div class="a" style="left:1334px;top:158px;width:28px;height:557px;background:#f0f0f3"></div>
<div class="a" style="left:1363px;top:158px;width:2px;height:557px;background:#fafafa"></div>
<div class="a" style="left:1344px;top:132px;width:21px;height:26px;background:#f2f2f2"></div>
<svg class="a" style="left:1347px;top:138px" width="11" height="11" viewBox="0 0 11 11"><rect x="0.500" y="0.500" width="10" height="10" fill="#fff" stroke="#333"/><path d="M5.500 1.500 V9.500 M1.500 5.500 H9.500 M3 3 L8 8 M8 3 L3 8" stroke="#222" stroke-width="1"/></svg>
<div class="a" style="left:1352px;top:166px;width:7px;height:7px;background:#5cb85c"></div>
<div class="a" style="left:1362px;top:131px;width:1px;height:584px;background:#c4c4c4"></div>
<div class="a" style="left:1344px;top:157px;width:18px;height:1px;background:#8aa8c8"></div>
<div class="a" style="left:1350px;top:181px;width:11px;height:2px;background:#22e622"></div>
<div class="a" style="left:1350px;top:182px;width:11px;height:2px;background:#22e622"></div>
<div class="a" style="left:1350px;top:294px;width:11px;height:2px;background:#9cc0f0"></div>
<div class="a" style="left:1350px;top:326px;width:11px;height:2px;background:#22bb22"></div>
<div class="a" style="left:1350px;top:378px;width:11px;height:2px;background:#9cc0f0"></div>
<div class="a" style="left:1350px;top:403px;width:11px;height:2px;background:#9cc0f0"></div>
<div class="a" style="left:1350px;top:548px;width:11px;height:2px;background:#f08cb0"></div>
<!-- ===== Zoom video panel ===== -->
<div class="a" style="left:1114px;top:137px;width:230px;height:516px;background:#161616;border-radius:4px;box-shadow:0 2px 9px rgba(0,0,0,.33)"></div>
<div class="a" style="left:1117px;top:268px;width:224px;height:126px;background:#242424"></div>
<div class="a" style="left:1117px;top:396px;width:224px;height:126px;background:#242424"></div>
<div class="a" style="left:1117px;top:524px;width:224px;height:126px;background:#242424"></div>
<svg class="a" style="left:1117px;top:140px" width="224" height="126" viewBox="0 0 224 126">
<defs><linearGradient id="wall" x1="0" x2="1" y1="0" y2="0"><stop offset="0" stop-color="#e6f1ea"/><stop offset=".12" stop-color="#f3f6f1"/><stop offset=".5" stop-color="#eff3ee"/><stop offset=".75" stop-color="#e0eee5"/><stop offset="1" stop-color="#d3e8dc"/></linearGradient>
<radialGradient id="wl" cx=".22" cy=".6" r=".5"><stop offset="0" stop-color="#fbfbf9"/><stop offset="1" stop-color="#fbfbf9" stop-opacity="0"/></radialGradient>
<linearGradient id="skin" x1="0" x2="0" y1="0" y2="1"><stop offset="0" stop-color="#ba9070"/><stop offset=".5" stop-color="#a87e5e"/><stop offset="1" stop-color="#976c50"/></linearGradient>
<filter id="bl"><feGaussianBlur stdDeviation="1.0"/></filter><filter id="bl2"><feGaussianBlur stdDeviation="0.8"/></filter><clipPath id="c1"><rect width="224" height="126"/></clipPath></defs>
<rect width="224" height="126" fill="url(#wall)"/><rect width="224" height="126" fill="url(#wl)"/>
<g clip-path="url(#c1)">
<g filter="url(#bl)">
<path d="M22 130 C27 108 42 97 70 86 L98 84 L122 86 C150 92 168 98 178 130Z" fill="#0b0c16"/>
<path d="M82 80 H116 V96 L100 116 L84 98Z" fill="#94694c"/>
<path d="M74 56 C73 40 80 30 98 30 C116 30 124 40 123 56 C123 72 118 86 110 92 C104 97 94 97 88 92 C79 86 74 72 74 56Z" fill="url(#skin)"/>
<path d="M74 60 C70 38 80 21 98 20 C116 20 126 36 122 58 C121 46 116 36 98 34 C82 35 76 46 74 60Z" fill="#262024"/>
<ellipse cx="74.500" cy="62" rx="2.500" ry="6" fill="#a87c5c"/><ellipse cx="122.500" cy="62" rx="2.500" ry="6" fill="#a87c5c"/>
</g>
<g filter="url(#bl2)">
<path d="M82 49.500 Q88 47 94 49.500" stroke="#33241e" stroke-width="2.200" fill="none"/><path d="M103 49.500 Q109 47 115 49.500" stroke="#33241e" stroke-width="2.200" fill="none"/>
<ellipse cx="88.500" cy="55.500" rx="4" ry="1.700" fill="#4a3228"/><ellipse cx="109" cy="55.500" rx="4" ry="1.700" fill="#4a3228"/>
<path d="M98 56 L97 68" stroke="#94694c" stroke-width="2.500"/><ellipse cx="98.500" cy="70" rx="5.500" ry="2" fill="#94694c"/>
<ellipse cx="98.500" cy="77.500" rx="7.500" ry="2.200" fill="#9a5a54"/>
<path d="M90 88 Q98.500 96 108 88" stroke="#8a6448" stroke-width="3" fill="none" opacity=".7"/>
<path d="M82 90 C84 104 92 112 100 118 M117 88 C116 100 110 110 104 116" stroke="#5a4634" stroke-width=".9" fill="none"/>
</g></g>
</svg>
<div class="a" style="left:1117px;top:246px;width:109px;height:20px;background:rgba(44,44,44,0.86)"></div><svg class="a" style="left:1120px;top:249px" width="15" height="15" viewBox="0 0 15 15"><rect x="4.700" y="0.800" width="5.600" height="8.600" rx="2.800" fill="#e8505a"/><path d="M2.800 6.500 Q2.800 11.200 7.500 11.200 Q12.200 11.200 12.200 6.500" stroke="#e8505a" stroke-width="1.300" fill="none"/><path d="M7.500 11 V13 M4.500 13.500 H10.500" stroke="#e8505a" stroke-width="1.700"/><path d="M1 14.200 L13.800 1" stroke="#242424" stroke-width="3"/><path d="M1 14.200 L13.800 1" stroke="#e8505a" stroke-width="1.500"/></svg><div class="t" style="left:1139.3px;top:250.0px;font-size:13.00px;color:#fff;letter-spacing:0.19px;">Administrador</div>
<div class="t" style="left:1175.5px;top:323.0px;font-size:15.00px;color:#fff;font-weight:700;letter-spacing:-0.19px;word-spacing:0.19px;">Sheila Montoya</div>
<div class="a" style="left:1117px;top:374px;width:115px;height:20px;background:rgba(44,44,44,0.86)"></div><svg class="a" style="left:1120px;top:377px" width="15" height="15" viewBox="0 0 15 15"><rect x="4.700" y="0.800" width="5.600" height="8.600" rx="2.800" fill="#e8505a"/><path d="M2.800 6.500 Q2.800 11.200 7.500 11.200 Q12.200 11.200 12.200 6.500" stroke="#e8505a" stroke-width="1.300" fill="none"/><path d="M7.500 11 V13 M4.500 13.500 H10.500" stroke="#e8505a" stroke-width="1.700"/><path d="M1 14.200 L13.800 1" stroke="#242424" stroke-width="3"/><path d="M1 14.200 L13.800 1" stroke="#e8505a" stroke-width="1.500"/></svg><div class="t" style="left:1139.3px;top:378.0px;font-size:13.00px;color:#fff;letter-spacing:-0.01px;word-spacing:0.01px;">Sheila Montoya</div>
<div class="a" style="left:1116px;top:395px;width:226px;height:128px;border:1px solid #86b41e;background:#242424"></div>
<svg class="a" style="left:1189px;top:419px" width="80" height="80" viewBox="0 0 80 80">
<defs><filter id="b3"><feGaussianBlur stdDeviation="0.55"/></filter></defs>
<rect width="80" height="80" fill="#fff"/>
<g filter="url(#b3)">
<path d="M34 20 C42 14 54 15 59 24 C63 30 63 38 61 44 C60 52 56 60 48 62 C40 64 34 58 34 52 C30 50 28 46 30 40 C24 40 14 42 10 38 C10 32 12 28 14 24 L17 30 L18 20 L22 30 L23 17 L27 30 L29 19 L32 30Z" fill="#8e8e8e"/>
<path d="M38 20 C46 16 55 18 58 26 C60 32 60 38 58 44 C54 38 50 36 46 38 C42 34 38 34 36 30 C34 26 35 22 38 20Z" fill="#cfcfcf"/>
<path d="M50 18 C56 22 60 30 58 42 M46 17 C54 20 58 30 56 40 M42 18 C50 20 55 28 54 38" stroke="#6a6a6a" stroke-width=".9" fill="none"/>
<path d="M39 24 C43 21 49 23 50 28 C51 33 48 37 44 37 C40 37 37 33 37 29 C37 27 38 25 39 24Z" fill="#e8e8e8" stroke="#333" stroke-width=".9"/>
<ellipse cx="41.500" cy="28" rx="1.700" ry="1.400" fill="#111"/><ellipse cx="46.500" cy="27.500" rx="1.900" ry="1.500" fill="#111"/>
<path d="M41 33 H47" stroke="#222" stroke-width="1.300"/>
<path d="M26 30 L30 40 L34 36 L30 26Z" fill="#1c1c1c"/>
<path d="M14 24 L17 38 M18 20 L21 38 M23 17 L25 38 M29 19 L29 38" stroke="#3a3a3a" stroke-width="1.300"/>
<path d="M36 50 C42 56 52 56 58 48 C60 54 56 62 48 63 C40 63 36 57 36 50Z" fill="#d6d6d6" stroke="#4a4a4a" stroke-width=".8"/>
<path d="M38 53 C44 58 52 58 57 52 M40 57 C45 61 52 60 56 56" stroke="#555" stroke-width=".8" fill="none"/>
<path d="M34 52 C36 60 42 64 48 63" stroke="#2a2a2a" stroke-width="1.600" fill="none"/>
<path d="M63 30 L66 28 L66 40 M68 34 L70 44 M62 50 C66 48 70 50 70 56 C68 62 64 62 62 58 C61 55 61 52 62 50Z" stroke="#555" stroke-width="1.300" fill="#9a9a9a"/>
</g>
<text x="40.200" y="48.500" font-family="Liberation Sans" font-weight="700" font-size="16" fill="#d81820" text-anchor="middle" textLength="67" lengthAdjust="spacingAndGlyphs" stroke="#8a0c12" stroke-width=".35">IRON MAIDEN</text>
</svg>
<div class="a" style="left:1117px;top:504px;width:120px;height:20px;background:rgba(44,44,44,0.86)"></div><div class="t" style="left:1121.8px;top:508.0px;font-size:13.00px;color:#fff;letter-spacing:0.01px;word-spacing:-0.01px;">Walther Mora León</div>
<svg class="a" style="left:1189px;top:547px" width="80" height="80" viewBox="0 0 80 80">
<defs><linearGradient id="pk" x1="0" x2="1"><stop offset="0" stop-color="#e9a9b0"/><stop offset=".2" stop-color="#e69aa1"/><stop offset=".22" stop-color="#e58c94"/><stop offset=".76" stop-color="#e88890"/><stop offset=".78" stop-color="#ee838b"/><stop offset="1" stop-color="#ea8a92"/></linearGradient>
<linearGradient id="pk2" x1="0" x2="0" y1="0" y2="1"><stop offset="0" stop-color="#d87880" stop-opacity=".35"/><stop offset=".5" stop-color="#d87880" stop-opacity="0"/></linearGradient>
<filter id="b4"><feGaussianBlur stdDeviation="1.0"/></filter><filter id="b5"><feGaussianBlur stdDeviation="2.2"/></filter><clipPath id="c4"><rect width="80" height="80"/></clipPath></defs>
<rect width="80" height="80" fill="url(#pk)"/><rect width="80" height="80" fill="url(#pk2)"/>
<g clip-path="url(#c4)">
<g filter="url(#b5)">
<path d="M-6 68 C4 62 14 62 20 70 L22 86 L-6 86Z" fill="#8497a8"/>
<path d="M60 54 C68 50 86 50 86 56 L86 86 L58 86Z" fill="#7b91a3"/>
</g>
<g filter="url(#b4)">
<rect x="10.500" y="-2" width="6" height="15" fill="#5e444c"/>
<path d="M18 58 C22 54 28 52 32 52 L32 72 L20 74Z" fill="#8594a2"/>
<path d="M33 50 C38 44 46 42 52 44 L62 48 C64 58 64 70 62 84 L33 84Z" fill="#4f666f"/>
<path d="M38 48 L36 84 M44 44 L43 84 M50 44 L50 84 M56 46 L57 84 M33 54 L63 52 M33 61 L64 59 M33 68 L64 66 M33 75 L63 73" stroke="#2c3d45" stroke-width="1.300" fill="none"/>
<path d="M41 47 L47 84 M47 45 L53 84" stroke="#90a6ae" stroke-width=".8" fill="none" opacity=".7"/>
<path d="M46 37 L57 44 L52 47 L44 43Z" fill="#d42a34"/>
<path d="M33 34 L45 36 L44 47 L35 50Z" fill="#c89484"/>
<path d="M26 26 C25 17 30 12 37 12 C44 12 48 18 47 27 C46 35 42 41 37 41 C31 41 27 34 26 26Z" fill="#d9a999"/>
<path d="M24 27 C21 14 28 7 36 8 C43 8 48 13 46 22 C44 18 40 15.500 35 16 C29 16.500 27 20 26 28Z" fill="#1a1317"/>
<path d="M25 34 C29 30 34 34 34 40 C35 46 38 50 37 54 L30 84 L11 84 C16 72 24 62 26 54 C27 46 24 40 25 34Z" fill="#e2b4a4"/>
<path d="M27 55 L37 59" stroke="#e2352c" stroke-width="2"/>
<path d="M29 23.500 h5 M38 23 h5" stroke="#3a2624" stroke-width="1.600"/>
<path d="M35.500 24 L35 30" stroke="#b88474" stroke-width="1.500"/>
<ellipse cx="36" cy="34" rx="3.200" ry="1.100" fill="#a8585a"/>
</g></g></svg>
<div class="a" style="left:1117px;top:630px;width:120px;height:20px;background:rgba(44,44,44,0.86)"></div><svg class="a" style="left:1120px;top:633px" width="15" height="15" viewBox="0 0 15 15"><rect x="4.700" y="0.800" width="5.600" height="8.600" rx="2.800" fill="#e8505a"/><path d="M2.800 6.500 Q2.800 11.200 7.500 11.200 Q12.200 11.200 12.200 6.500" stroke="#e8505a" stroke-width="1.300" fill="none"/><path d="M7.500 11 V13 M4.500 13.500 H10.500" stroke="#e8505a" stroke-width="1.700"/><path d="M1 14.200 L13.800 1" stroke="#242424" stroke-width="3"/><path d="M1 14.200 L13.800 1" stroke="#e8505a" stroke-width="1.500"/></svg><div class="t" style="left:1139.3px;top:634.0px;font-size:13.00px;color:#fff;letter-spacing:-0.87px;word-spacing:0.87px;">FABIAN JURADO</div>
<!--/VIDEO-->
<!-- ===== Zoom top ===== -->
<div class="a" id="zt"></div>
<!--ZOOMTOP-->
<div class="a" style="left:8px;top:8px;width:24px;height:24px;border-radius:5px;background:rgba(20,20,20,0.8)"></div>
<svg class="a" style="left:13px;top:12px" width="14" height="17" viewBox="0 0 14 17"><path d="M7 0.500 C9 2 11.500 2.500 13.500 2.500 C13.800 9 11.500 14 7 16.500 C2.500 14 0.200 9 0.500 2.500 C2.500 2.500 5 2 7 0.500Z" fill="#23d959"/><path d="M3.800 8.300 L6.200 10.700 L10.400 5.800" stroke="#14301c" stroke-width="1.700" fill="none" stroke-linecap="round" stroke-linejoin="round"/></svg>
<div class="a" style="left:40px;top:8px;width:187px;height:23px;border-radius:3px 0 0 3px;background:rgba(0,0,0,0.40)"></div>
<div class="a" style="left:175px;top:8px;width:52px;height:23px;background:rgba(0,0,0,0.16)"></div>
<svg class="a" style="left:52px;top:12px" width="15" height="15" viewBox="0 0 15 15"><circle cx="7.500" cy="7.500" r="6.300" fill="#b9b9b9" stroke="#e6e6e6" stroke-width="1.200"/><circle cx="7.500" cy="7.500" r="2.600" fill="#e8121c"/></svg>
<div class="t" style="left:85.3px;top:14.0px;font-size:13.00px;color:#fff;letter-spacing:-0.79px;">Grabando...</div>
<div class="a" style="left:184px;top:17px;width:3px;height:8px;background:#fff"></div><div class="a" style="left:190px;top:17px;width:3px;height:8px;background:#fff"></div>
<div class="a" style="left:211px;top:17px;width:8px;height:8px;background:#fff"></div>
<div class="a" style="left:235px;top:8px;width:42px;height:26px;border-radius:4px 0 0 4px;background:#f0393f"></div>
<div class="t" style="left:243.2px;top:14.0px;font-size:12.20px;color:#fff;font-weight:700;letter-spacing:-0.15px;">LIVE</div>
<div class="a" style="left:277px;top:8px;width:97px;height:23px;border-radius:0 3px 3px 0;background:rgba(58,58,58,0.6)"></div>
<div class="t" style="left:286.7px;top:14.0px;font-size:12.50px;color:#fff;letter-spacing:-0.66px;word-spacing:0.66px;">en Facebook</div>
<svg class="a" style="left:360px;top:18px" width="8" height="5"><path d="M0 0 H8 L4 5Z" fill="#fff"/></svg>
<div class="a" style="left:464px;top:0;width:325px;height:22px;border-radius:0 0 4px 4px;background:#23d959"></div>
<div class="t" style="left:482.0px;top:5.0px;font-size:12.30px;color:#175a2c;font-weight:700;letter-spacing:-0.28px;word-spacing:0.28px;">Usted está viendo la pantalla de Walther Mora León</div>
<div class="a" style="left:790px;top:0;width:120px;height:22px;border-radius:0 0 4px 4px;background:#222326"></div>
<div class="t" style="left:818.0px;top:5.0px;font-size:12.30px;color:#fff;font-weight:700;letter-spacing:-0.96px;word-spacing:0.96px;">Ver Opciones</div>
<svg class="a" style="left:892px;top:8px" width="8" height="6"><path d="M1 1 L4 4.200 L7 1" stroke="#fff" stroke-width="1.500" fill="none"/></svg>
<div class="a" style="left:1304px;top:8px;width:54px;height:26px;border-radius:8px;background:rgba(40,40,40,0.28)"></div>
<svg class="a" style="left:1311px;top:14px" width="11" height="11" viewBox="0 0 11 11"><rect x="0" y="0" width="3" height="3" fill="#fff"/><rect x="4" y="0" width="3" height="3" fill="#fff"/><rect x="8" y="0" width="3" height="3" fill="#fff"/><rect x="0" y="4" width="11" height="7" fill="#fff"/></svg>
<div class="t" style="left:1326.0px;top:14.0px;font-size:12.80px;color:#fff;letter-spacing:-0.68px;">Vista</div>
<!--/ZOOMTOP-->
<!-- ===== Zoom bottom ===== -->
<div class="a" id="zb"></div>
<!--ZOOMBOTTOM-->
<svg class="a" style="left:59px;top:719px" width="26" height="26" viewBox="0 0 26 26"><rect x="9.500" y="2.500" width="7.500" height="13" rx="3.750" fill="#8c8c8c"/><path d="M6.800 11.500 Q6.800 18.500 13.200 18.500 Q19.700 18.500 19.700 11.500" stroke="#8c8c8c" stroke-width="1.500" fill="none"/><path d="M13.200 18.500 V22.500 M9.500 22.800 H17" stroke="#8c8c8c" stroke-width="1.600"/><path d="M1.500 24 L24.500 1.500" stroke="#e0484e" stroke-width="1.600"/></svg>
<svg class="a" style="left:125.5px;top:730px" width="9" height="6"><path d="M0.800 5 L4.500 1.300 L8.200 5" stroke="#d0d0d0" stroke-width="1.500" fill="none"/></svg>
<div class="t" style="left:10.0px;top:749.0px;font-size:12.20px;color:#dadada;letter-spacing:-0.35px;word-spacing:0.35px;-webkit-text-stroke:0.25px #dadada;">Cancelar silenciar ahora</div>
<svg class="a" style="left:178px;top:724px" width="26" height="16" viewBox="0 0 26 16"><rect x="0.500" y="1" width="18" height="14" rx="3.500" fill="#a6a6a6"/><path d="M19 6.500 L25 2.500 V13.500 L19 9.500Z" fill="#a6a6a6"/></svg>
<svg class="a" style="left:223.5px;top:730px" width="9" height="6"><path d="M0.800 5 L4.500 1.300 L8.200 5" stroke="#d0d0d0" stroke-width="1.500" fill="none"/></svg>
<div class="t" style="left:155.0px;top:749.0px;font-size:12.20px;color:#dadada;letter-spacing:-0.24px;word-spacing:0.24px;-webkit-text-stroke:0.25px #dadada;">Detener video</div>
<svg class="a" style="left:421px;top:720px" width="20" height="23" viewBox="0 0 20 23"><path d="M10 0.800 C13 2.500 16 3.500 19.200 3.800 C19.500 12 16.500 18.500 10 22.200 C3.500 18.500 0.500 12 0.800 3.800 C4 3.500 7 2.500 10 0.800Z" fill="#a6a6a6"/><path d="M10 3.300 C12 4.400 14.500 5.300 17 5.600 V11 H10Z" fill="#1a1a1a"/><path d="M10 11 V19.500 C6.500 17.500 3.800 14.500 3.200 11Z" fill="#1a1a1a"/></svg>
<div class="t" style="left:404.2px;top:749.0px;font-size:12.20px;color:#dadada;letter-spacing:-0.22px;-webkit-text-stroke:0.25px #dadada;">Seguridad</div>
<svg class="a" style="left:523px;top:723px" width="26" height="19" viewBox="0 0 26 19"><circle cx="8.500" cy="5" r="4.300" fill="#a6a6a6"/><path d="M0.500 18 C0.500 11.500 4 9.800 8.500 9.800 C13 9.800 16.500 11.500 16.500 18Z" fill="#a6a6a6"/><circle cx="19" cy="6" r="3.500" fill="#a6a6a6"/><path d="M17.800 18 C17.800 14 17 12.500 15.500 11 C17 10.300 18 10.200 19 10.200 C22.500 10.200 25.500 12 25.500 18Z" fill="#a6a6a6"/></svg>
<div class="t" style="left:552.4px;top:724.0px;font-size:12.50px;color:#dadada;letter-spacing:-1.35px;">21</div>
<svg class="a" style="left:584px;top:730px" width="9" height="6"><path d="M0.800 5 L4.500 1.300 L8.200 5" stroke="#d0d0d0" stroke-width="1.500" fill="none"/></svg>
<div class="t" style="left:502.6px;top:749.0px;font-size:12.20px;color:#dadada;letter-spacing:-0.25px;-webkit-text-stroke:0.25px #dadada;">Participantes</div>
<svg class="a" style="left:630px;top:722px" width="23" height="20" viewBox="0 0 23 20"><path d="M4 0.500 H18 Q21.500 0.500 21.500 4 V10 Q21.500 13.500 18 13.500 H10.500 L5.500 18.800 V13.500 H4 Q0.500 13.500 0.500 10 V4 Q0.500 0.500 4 0.500Z" fill="#a6a6a6"/></svg>
<div class="a" style="left:644px;top:717px;width:15px;height:14px;border-radius:5px;background:#e8303a"></div>
<div class="t" style="left:649.0px;top:719.0px;font-size:10.50px;color:#fff;font-weight:700;">1</div>
<div class="t" style="left:629.0px;top:749.0px;font-size:12.20px;color:#dadada;letter-spacing:-0.49px;-webkit-text-stroke:0.25px #dadada;">Chat</div>
<div class="a" style="left:726px;top:723px;width:24px;height:18px;border-radius:3px;background:#23d959"></div>
<svg class="a" style="left:733px;top:726px" width="10" height="12" viewBox="0 0 10 12"><path d="M5 11 V2 M1.300 5.300 L5 1.500 L8.700 5.300" stroke="#14301c" stroke-width="1.700" fill="none"/></svg>
<svg class="a" style="left:778.5px;top:730px" width="9" height="6"><path d="M0.800 5 L4.500 1.300 L8.200 5" stroke="#d0d0d0" stroke-width="1.500" fill="none"/></svg>
<div class="t" style="left:689.5px;top:749.0px;font-size:12.20px;color:#23d959;letter-spacing:-0.15px;word-spacing:0.15px;-webkit-text-stroke:0.25px #23d959;">Compartir pantalla</div>
<div class="a" style="left:849px;top:720px;width:20px;height:20px;border-radius:2px;background:#b4b4b4"></div><div class="a" style="left:855px;top:726px;width:2px;height:8px;background:#1a1a1a"></div><div class="a" style="left:861px;top:726px;width:2px;height:8px;background:#1a1a1a"></div>
<div class="a" style="left:874px;top:720px;width:20px;height:20px;border-radius:2px;background:#b4b4b4"></div><div class="a" style="left:880px;top:726px;width:8px;height:8px;background:#1a1a1a"></div>
<div class="t" style="left:803.3px;top:751.0px;font-size:12.20px;color:#dadada;letter-spacing:-0.20px;word-spacing:0.20px;-webkit-text-stroke:0.25px #dadada;">Pausar/detener grabación</div>
<svg class="a" style="left:977px;top:719px" width="25" height="24" viewBox="0 0 25 24"><circle cx="10.500" cy="13.500" r="9" fill="#a6a6a6"/><circle cx="7.300" cy="11.500" r="1.400" fill="#1a1a1a"/><circle cx="13.700" cy="11.500" r="1.400" fill="#1a1a1a"/><path d="M6 15.500 Q10.500 20 15 15.500" stroke="#1a1a1a" stroke-width="1.500" fill="none"/><path d="M20.500 1 V8 M17 4.500 H24" stroke="#c8c8c8" stroke-width="1.300"/><circle cx="20.500" cy="4.500" r="4.500" fill="#1a1a1a" opacity="0"/></svg>
<div class="t" style="left:957.2px;top:749.0px;font-size:12.20px;color:#dadada;letter-spacing:-0.46px;-webkit-text-stroke:0.25px #dadada;">Reacciones</div>
<div class="a" style="left:1057px;top:730px;width:4px;height:4px;border-radius:2px;background:#c4c4c4"></div>
<div class="a" style="left:1065.3px;top:730px;width:4px;height:4px;border-radius:2px;background:#c4c4c4"></div>
<div class="a" style="left:1073.3px;top:730px;width:4px;height:4px;border-radius:2px;background:#c4c4c4"></div>
<div class="t" style="left:1056.0px;top:749.0px;font-size:12.20px;color:#dadada;letter-spacing:-0.34px;-webkit-text-stroke:0.25px #dadada;">Más</div>
<div class="a" style="left:1286px;top:728px;width:68px;height:27px;border-radius:7px;background:#c02828"></div>
<div class="t" style="left:1297.3px;top:735.0px;font-size:12.20px;color:#fff;font-weight:700;letter-spacing:-0.55px;">Finalizar</div>
<!--/ZOOMBOTTOM-->
</body>
</html>
